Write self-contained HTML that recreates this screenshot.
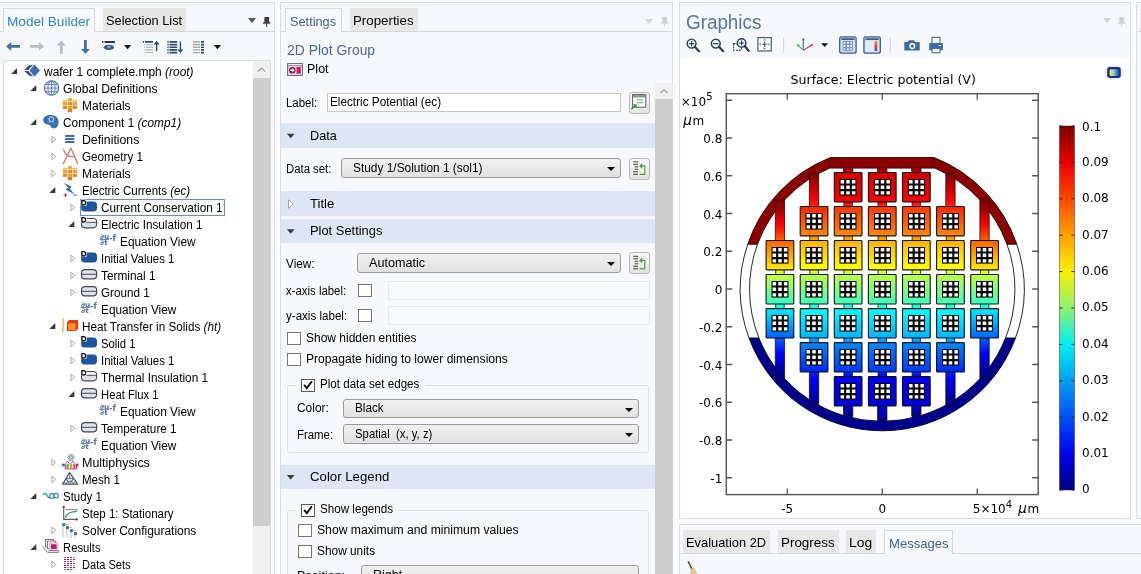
<!DOCTYPE html><html><head><meta charset="utf-8"><title>COMSOL</title><style>
*{box-sizing:border-box;margin:0;padding:0}
html,body{width:1141px;height:574px;overflow:hidden;background:#fafbfe;}
body{position:relative;font-family:"Liberation Sans",sans-serif;font-size:12.5px;color:#000;}
.a{position:absolute}
.t{position:absolute;white-space:pre;line-height:16px;height:16px}
.pn{position:absolute;border:1px solid #d8dce7;background:#f6f8fd}
.tab{position:absolute;top:8px;height:24px;font-size:14px;line-height:22px;white-space:nowrap}
.tab.on{background:#f8f9fd;border:1px solid #d3d7e0;border-bottom:none;color:#3c7fc4}
.tab.off{background:#e7e7e7;color:#000;height:23px}
.sec{position:absolute;left:281px;width:374px;height:24px;background:#dce6f4}
.sec span{position:absolute;left:29px;top:3px;font-size:13.5px;line-height:18px}
.cb{position:absolute;width:13px;height:13px;border:1px solid #4a4a4a;background:#fff}
.combo{position:absolute;height:21px;border:1px solid #9a9a9a;border-radius:3px;background:linear-gradient(#f1f1f1,#e1e1e1)}
.combo i{position:absolute;right:4px;top:8px;width:0;height:0;border-left:4px solid transparent;border-right:4px solid transparent;border-top:5px solid #000}
.combo span{position:absolute;left:11px;top:2px;line-height:16px;white-space:nowrap}
.inp{position:absolute;background:#fff;border:1px solid #c6c6c6}
.btn{position:absolute;width:21px;height:22px;border:1px solid #b5b5b5;border-radius:3px;background:linear-gradient(#f8f8f8,#e4e4e4)}
.grp{position:absolute;border:1px solid #dcdfe6;border-radius:3px}
</style></head><body><div id="root" style="position:absolute;left:0;top:0;width:1141px;height:574px;will-change:transform">
<div class="pn" style="left:-1px;top:2px;width:276px;height:580px"></div>
<div class="a" style="left:0;top:31px;width:275px;height:1px;background:#d3d7e0"></div>
<div class="tab on" style="left:3px;width:92px"></div>
<span class="t" id="x1" style="left:7.3px;top:11.5px;font-size:13.5px;line-height:20px;height:20px;color:#2e86d6;transform:scaleX(1.0067);transform-origin:0 50%;">Model Builder</span>
<div class="tab off" style="left:103px;width:83px"></div>
<span class="t" id="x2" style="left:106.3px;top:10.5px;font-size:13.5px;line-height:20px;height:20px;transform:scaleX(0.9477);transform-origin:0 50%;">Selection List</span>
<div class="a" style="left:248px;top:18.3px;border-left:4px solid transparent;border-right:4px solid transparent;border-top:5px solid #555"></div>
<svg class="a" style="left:258px;top:10px" width="16" height="20" viewBox="258 10 16 20"><path d="M264.4 17h4.7v5.3h1.2v1.5h-7.2v-1.5h1.3z" fill="#3c3c3c"/><path d="M266.2 23.8h0.9v3.2h-0.9z" fill="#3c3c3c"/></svg>
<svg class="a" style="left:0px;top:34px" width="232" height="24" viewBox="0 34 232 24"><path d="M6.2 46.4 L11.2 41.9 L11.2 45 L19.9 45 L19.9 47.8 L11.2 47.8 L11.2 50.9 Z" fill="#3e6fa9"/><path d="M43.9 46.4 L38.9 41.9 L38.9 45 L30 45 L30 47.8 L38.9 47.8 L38.9 50.9 Z" fill="#b9bdc6"/><path d="M61.35 40.4 L65.7 45.4 L62.75 45.4 L62.75 53.7 L59.95 53.7 L59.95 45.4 L57 45.4 Z" fill="#b9bdc6"/><path d="M85.4 53.9 L89.8 48.9 L86.8 48.9 L86.8 40 L84 40 L84 48.9 L81 48.9 Z" fill="#3e6fa9"/><path d="M102.1 40.9h1.3v2h-1.3z M104.5 40.9h10.4v2h-10.4z" fill="#25354d"/><ellipse cx="108.9" cy="47.3" rx="5.1" ry="2.6" fill="#3d5f8f"/><ellipse cx="108.9" cy="47" rx="1.7" ry="1.2" fill="#8aa4c8"/><path d="M124 45 L131.1 45 L127.55 49.3 Z" fill="#111"/><path d="M142.9 41.0h1.3v1.8h-1.3z M145 41.0h8v1.8h-8z" fill="#2f4b6f"/><path d="M143.9 43.900000000000006h1v1.1h-1z M146 43.900000000000006h7v1.1h-7zM143.9 46.6h1v1.1h-1z M146 46.6h7v1.1h-7zM143.9 49.300000000000004h1v1.1h-1z M146 49.300000000000004h7v1.1h-7zM143.9 52.0h1v1.1h-1z M146 52.0h7v1.1h-7z" fill="#a9b0bb"/><path d="M156.6 40.8 L159.6 44.4 L157.3 44.4 L157.3 51.2 L155.9 51.2 L155.9 44.4 L153.6 44.4 Z" fill="#2f4b6f"/><path d="M167.4 41.0h1.3v1.7h-1.3z M169.6 41.0h7.6v1.7h-7.6zM167.4 43.7h1.3v1.7h-1.3z M169.6 43.7h7.6v1.7h-7.6zM167.4 46.4h1.3v1.7h-1.3z M169.6 46.4h7.6v1.7h-7.6zM167.4 49.1h1.3v1.7h-1.3z M169.6 49.1h7.6v1.7h-7.6zM167.4 51.8h1.3v1.7h-1.3z M169.6 51.8h7.6v1.7h-7.6z" fill="#2f4b6f"/><path d="M180.4 53 L183.4 49.4 L181.1 49.4 L181.1 41.5 L179.7 41.5 L179.7 49.4 L177.4 49.4 Z" fill="#2f4b6f"/><path d="M193 41.1h7v1.4h-7zM193 43.800000000000004h7v1.4h-7zM193 46.5h7v1.4h-7zM193 49.2h7v1.4h-7zM193 51.9h7v1.4h-7z" fill="#a8a8a8"/><path d="M201 41.0h3v1.7h-3zM201 43.7h3v1.7h-3zM201 46.4h3v1.7h-3zM201 49.1h3v1.7h-3zM201 51.8h3v1.7h-3z" fill="#2f4b6f"/><path d="M213.9 45 L221 45 L217.45 49.3 Z" fill="#111"/></svg>
<div class="a" style="left:3px;top:60px;width:268px;height:520px;background:#fff;border:1px solid #d6dae3"></div>
<div class="a" style="left:253px;top:61px;width:17px;height:513px;background:#f0f0f0"></div>
<div class="a" style="left:253px;top:78px;width:17px;height:448px;background:#cdcdcd"></div>
<svg class="a" style="left:253px;top:61px" width="17" height="17"><path d="M5 10.5 L8.5 7 L12 10.5" fill="none" stroke="#9a9a9a" stroke-width="1.2"/></svg>
<span class="t" id="r0" style="left:43.95px;top:63.5px;font-size:12.5px;line-height:16px;height:16px;transform:scaleX(0.9570);transform-origin:0 50%;">wafer 1 complete.mph<i> (root)</i></span>
<svg class="a" style="left:10px;top:66px" width="11" height="11" viewBox="-0.25 -0.5 11 11"><path d="M6.8 1.5 L6.8 7.4 L0.8 7.4 Z" fill="#3a3a3a"/></svg>
<svg class="a" style="left:22px;top:61px" width="23" height="21" viewBox="-22.25 -10.5 23 21"><path d="M-9.85 -7 L-4.3 -1 L-9.85 5.3 L-14.7 -1.1 Z" fill="#3a69ae"/><path d="M-20.3 -1.5 L-15.1 -6.2 L-11.2 -6.8 L-15.8 -1.5 Z" fill="#34517f"/><path d="M-20.1 -0.6 L-15.8 -0.6 L-11.1 4.9 L-15.1 3.9 Z" fill="#34517f"/></svg>
<span class="t" id="r1" style="left:62.8px;top:80.5px;font-size:12.5px;line-height:16px;height:16px;transform:scaleX(0.9656);transform-origin:0 50%;">Global Definitions</span>
<svg class="a" style="left:29px;top:83px" width="11" height="11" viewBox="-0.5 -0.5 11 11"><path d="M6.8 1.5 L6.8 7.4 L0.8 7.4 Z" fill="#3a3a3a"/></svg>
<svg class="a" style="left:41px;top:78px" width="23" height="21" viewBox="-22.5 -10.5 23 21"><circle cx="-11.95" cy="-0.4" r="7.1" fill="#eef3fb" stroke="#5a7fb3" stroke-width="1.3"/><path d="M-11.95 -7.5 V6.7 M-19 -0.4 H-4.9 M-17.8 -4 H-6.1 M-17.8 3.2 H-6.1" stroke="#5a7fb3" stroke-width="0.9" fill="none"/><ellipse cx="-11.95" cy="-0.4" rx="3.6" ry="7.1" fill="none" stroke="#5a7fb3" stroke-width="0.9"/></svg>
<span class="t" id="r2" style="left:81.8px;top:97.5px;font-size:12.5px;line-height:16px;height:16px;transform:scaleX(0.9582);transform-origin:0 50%;">Materials</span>
<svg class="a" style="left:60px;top:95px" width="23" height="21" viewBox="-22.5 -10.5 23 21"><rect x="-19.6" y="-3.6" width="4.3" height="3.2" fill="#f2a12e"/><rect x="-19.6" y="0.2" width="4.3" height="3.2" fill="#e58a22"/><rect x="-14.7" y="-7.4" width="4.3" height="3.2" fill="#f5a733"/><rect x="-14.7" y="-3.6" width="4.3" height="3.2" fill="#e9922a"/><rect x="-14.7" y="0.2" width="4.3" height="3.2" fill="#f0a030"/><rect x="-14.7" y="3.5" width="4.3" height="3.2" fill="#dd7f1f"/><rect x="-9.8" y="-3.6" width="4.3" height="3.2" fill="#f2a12e"/><rect x="-9.8" y="0.2" width="4.3" height="3.2" fill="#e58a22"/><rect x="-19.6" y="-5.6" width="4.3" height="1.6" fill="#f7b95a"/><rect x="-9.8" y="-5.6" width="4.3" height="1.6" fill="#f7b95a"/></svg>
<span class="t" id="r3" style="left:62.8px;top:114.5px;font-size:12.5px;line-height:16px;height:16px;transform:scaleX(0.9494);transform-origin:0 50%;">Component 1<i> (comp1)</i></span>
<svg class="a" style="left:29px;top:117px" width="11" height="11" viewBox="-0.5 -0.5 11 11"><path d="M6.8 1.5 L6.8 7.4 L0.8 7.4 Z" fill="#3a3a3a"/></svg>
<svg class="a" style="left:41px;top:112px" width="23" height="21" viewBox="-22.5 -10.5 23 21"><path d="M-20.4 -2.6 C-20.4 -5.8 -16.6 -7.5 -12.9 -7.5 C-8.6 -7.5 -5.2 -5.2 -5 -1.6 C-4.9 1.2 -5.2 3.9 -7.4 5.3 C-9.4 6.5 -12.3 5.8 -12.9 3.7 C-13.3 2.4 -14.4 2.5 -16 2 C-18.6 1.2 -20.4 -0.2 -20.4 -2.6 Z" fill="#3873b7"/><path d="M-14.3 -0.6 h1.3 v-0.6 c-1.1 -0.5 -1.5 -1.3 -1.5 -2.2 c0 -1.4 1.1 -2.2 2.3 -2.2 c1.2 0 2.3 0.8 2.3 2.2 c0 0.9 -0.4 1.7 -1.5 2.2 v0.6 h1.3" fill="none" stroke="#fff" stroke-width="0.9"/></svg>
<span class="t" id="r4" style="left:81.8px;top:131.5px;font-size:12.5px;line-height:16px;height:16px;transform:scaleX(0.9824);transform-origin:0 50%;">Definitions</span>
<svg class="a" style="left:49px;top:134px" width="11" height="11" viewBox="-0.5 -0.5 11 11"><path d="M2.4 1.6 L6.2 4.9 L2.4 8.2 Z" fill="#fff" stroke="#a9a9a9" stroke-width="1"/></svg>
<svg class="a" style="left:60px;top:129px" width="23" height="21" viewBox="-22.5 -10.5 23 21"><path d="M-17.4 -4.5h9.3v1.9h-9.3z M-17.4 -1.4h9.3v1.9h-9.3z M-17.4 1.6h9.3v1.9h-9.3z" fill="#3a6ea8"/></svg>
<span class="t" id="r5" style="left:81.8px;top:148.5px;font-size:12.5px;line-height:16px;height:16px;transform:scaleX(0.9355);transform-origin:0 50%;">Geometry 1</span>
<svg class="a" style="left:49px;top:151px" width="11" height="11" viewBox="-0.5 -0.5 11 11"><path d="M2.4 1.6 L6.2 4.9 L2.4 8.2 Z" fill="#fff" stroke="#a9a9a9" stroke-width="1"/></svg>
<svg class="a" style="left:60px;top:146px" width="23" height="21" viewBox="-22.5 -10.5 23 21"><path d="M-11.5 -8.3 L-19.2 7.2 M-11.5 -8.3 L-4.8 7.2" stroke="#e0685c" stroke-width="1.2" fill="none" stroke-linecap="round"/><path d="M-18.9 -7.2 C-18.3 -2.2 -13.5 1.2 -7.9 0.1" stroke="#e0685c" stroke-width="1.1" fill="none"/></svg>
<span class="t" id="r6" style="left:81.8px;top:165.5px;font-size:12.5px;line-height:16px;height:16px;transform:scaleX(0.9582);transform-origin:0 50%;">Materials</span>
<svg class="a" style="left:49px;top:168px" width="11" height="11" viewBox="-0.5 -0.5 11 11"><path d="M2.4 1.6 L6.2 4.9 L2.4 8.2 Z" fill="#fff" stroke="#a9a9a9" stroke-width="1"/></svg>
<svg class="a" style="left:60px;top:163px" width="23" height="21" viewBox="-22.5 -10.5 23 21"><rect x="-19.6" y="-3.6" width="4.3" height="3.2" fill="#f2a12e"/><rect x="-19.6" y="0.2" width="4.3" height="3.2" fill="#e58a22"/><rect x="-14.7" y="-7.4" width="4.3" height="3.2" fill="#f5a733"/><rect x="-14.7" y="-3.6" width="4.3" height="3.2" fill="#e9922a"/><rect x="-14.7" y="0.2" width="4.3" height="3.2" fill="#f0a030"/><rect x="-14.7" y="3.5" width="4.3" height="3.2" fill="#dd7f1f"/><rect x="-9.8" y="-3.6" width="4.3" height="3.2" fill="#f2a12e"/><rect x="-9.8" y="0.2" width="4.3" height="3.2" fill="#e58a22"/><rect x="-19.6" y="-5.6" width="4.3" height="1.6" fill="#f7b95a"/><rect x="-9.8" y="-5.6" width="4.3" height="1.6" fill="#f7b95a"/></svg>
<span class="t" id="r7" style="left:81.8px;top:182.5px;font-size:12.5px;line-height:16px;height:16px;transform:scaleX(0.9209);transform-origin:0 50%;">Electric Currents<i> (ec)</i></span>
<svg class="a" style="left:48px;top:185px" width="11" height="11" viewBox="-0.5 -0.5 11 11"><path d="M6.8 1.5 L6.8 7.4 L0.8 7.4 Z" fill="#3a3a3a"/></svg>
<svg class="a" style="left:60px;top:180px" width="23" height="21" viewBox="-22.5 -10.5 23 21"><path d="M-18.6 -7.7 L-10.6 -3.6 L-12.8 -1.9 L-7.8 3.9 L-17 -1 L-14.4 -2.8 Z" fill="#2f6fb8"/><path d="M-18.9 4.6h3.6 M-17.1 2.8v3.6" stroke="#c0202c" stroke-width="1"/><path d="M-9.2 4.6h4" stroke="#3a86b0" stroke-width="1"/></svg>
<div class="a" style="left:80px;top:199px;width:145px;height:17px;border:1px solid #6a8dc2;background:#fff"></div>
<span class="t" id="r8" style="left:100.8px;top:199.5px;font-size:12.5px;line-height:16px;height:16px;transform:scaleX(0.9409);transform-origin:0 50%;">Current Conservation 1</span>
<svg class="a" style="left:68px;top:202px" width="11" height="11" viewBox="-0.5 -0.5 11 11"><path d="M2.4 1.6 L6.2 4.9 L2.4 8.2 Z" fill="#fff" stroke="#a9a9a9" stroke-width="1"/></svg>
<svg class="a" style="left:79px;top:197px" width="23" height="21" viewBox="-22.5 -10.5 23 21"><rect x="-20.4" y="-5.9" width="15.9" height="10" rx="3.6" fill="#1c569e"/><rect x="-20.9" y="-7.9" width="6" height="6" fill="#fff"/><path d="M-19.6 -6.8 h1.6 c1.5 0 2.1 0.9 2.1 2.1 c0 1.2 -0.6 2.1 -2.1 2.1 h-1.6 Z" fill="none" stroke="#000" stroke-width="1.25"/></svg>
<span class="t" id="r9" style="left:100.8px;top:216.5px;font-size:12.5px;line-height:16px;height:16px;transform:scaleX(0.9374);transform-origin:0 50%;">Electric Insulation 1</span>
<svg class="a" style="left:67px;top:219px" width="11" height="11" viewBox="-0.5 -0.5 11 11"><path d="M6.8 1.5 L6.8 7.4 L0.8 7.4 Z" fill="#3a3a3a"/></svg>
<svg class="a" style="left:79px;top:214px" width="23" height="21" viewBox="-22.5 -10.5 23 21"><rect x="-20" y="-6" width="15.1" height="9.4" rx="3.3" fill="#dde1ea" stroke="#444b57" stroke-width="1.1"/><path d="M-19.4 -2.3 V-3 a2.8 2.8 0 0 1 2.8 -2.5 h8.3 a2.8 2.8 0 0 1 2.8 2.5 V-2.3 Z" fill="#fff"/><path d="M-20 -2.2 H-4.9" stroke="#444b57" stroke-width="1"/><rect x="-20.9" y="-7.9" width="6" height="6" fill="#fff"/><path d="M-19.6 -6.8 h1.6 c1.5 0 2.1 0.9 2.1 2.1 c0 1.2 -0.6 2.1 -2.1 2.1 h-1.6 Z" fill="none" stroke="#000" stroke-width="1.25"/></svg>
<span class="t" id="r10" style="left:119.8px;top:233.5px;font-size:12.5px;line-height:16px;height:16px;transform:scaleX(0.9487);transform-origin:0 50%;">Equation View</span>
<svg class="a" style="left:98px;top:231px" width="23" height="21" viewBox="-22.5 -10.5 23 21"><g fill="#4f6f9e" font-family='"DejaVu Sans",sans-serif' font-size="6.8" font-weight="bold"><text x="-20.6" y="-3" textLength="9.2" lengthAdjust="spacingAndGlyphs">∂u</text><text x="-20.4" y="3.9" textLength="7.6" lengthAdjust="spacingAndGlyphs">∂t</text><text x="-11.2" y="-0.6" font-size="9" font-weight="bold" textLength="6.6" lengthAdjust="spacingAndGlyphs">-f</text></g><path d="M-20.8 -1.9 h9.6" stroke="#4f6f9e" stroke-width="0.9"/></svg>
<span class="t" id="r11" style="left:100.8px;top:250.5px;font-size:12.5px;line-height:16px;height:16px;transform:scaleX(0.9126);transform-origin:0 50%;">Initial Values 1</span>
<svg class="a" style="left:68px;top:253px" width="11" height="11" viewBox="-0.5 -0.5 11 11"><path d="M2.4 1.6 L6.2 4.9 L2.4 8.2 Z" fill="#fff" stroke="#a9a9a9" stroke-width="1"/></svg>
<svg class="a" style="left:79px;top:248px" width="23" height="21" viewBox="-22.5 -10.5 23 21"><rect x="-20.4" y="-5.9" width="15.9" height="10" rx="3.6" fill="#1c569e"/><rect x="-20.9" y="-7.9" width="6" height="6" fill="#fff"/><path d="M-19.6 -6.8 h1.6 c1.5 0 2.1 0.9 2.1 2.1 c0 1.2 -0.6 2.1 -2.1 2.1 h-1.6 Z" fill="none" stroke="#000" stroke-width="1.25"/></svg>
<span class="t" id="r12" style="left:100.8px;top:267.5px;font-size:12.5px;line-height:16px;height:16px;transform:scaleX(0.9467);transform-origin:0 50%;">Terminal 1</span>
<svg class="a" style="left:68px;top:270px" width="11" height="11" viewBox="-0.5 -0.5 11 11"><path d="M2.4 1.6 L6.2 4.9 L2.4 8.2 Z" fill="#fff" stroke="#a9a9a9" stroke-width="1"/></svg>
<svg class="a" style="left:79px;top:265px" width="23" height="21" viewBox="-22.5 -10.5 23 21"><rect x="-20" y="-5.8" width="15.1" height="9.2" rx="3.4" fill="#dfe3ec" stroke="#3f4958" stroke-width="1.2"/><path d="M-20 -1.2 H-4.9" stroke="#3f4958" stroke-width="1"/></svg>
<span class="t" id="r13" style="left:100.8px;top:284.5px;font-size:12.5px;line-height:16px;height:16px;transform:scaleX(0.9372);transform-origin:0 50%;">Ground 1</span>
<svg class="a" style="left:68px;top:287px" width="11" height="11" viewBox="-0.5 -0.5 11 11"><path d="M2.4 1.6 L6.2 4.9 L2.4 8.2 Z" fill="#fff" stroke="#a9a9a9" stroke-width="1"/></svg>
<svg class="a" style="left:79px;top:282px" width="23" height="21" viewBox="-22.5 -10.5 23 21"><rect x="-20" y="-5.8" width="15.1" height="9.2" rx="3.4" fill="#dfe3ec" stroke="#3f4958" stroke-width="1.2"/><path d="M-20 -1.2 H-4.9" stroke="#3f4958" stroke-width="1"/></svg>
<span class="t" id="r14" style="left:100.8px;top:301.5px;font-size:12.5px;line-height:16px;height:16px;transform:scaleX(0.9456);transform-origin:0 50%;">Equation View</span>
<svg class="a" style="left:79px;top:299px" width="23" height="21" viewBox="-22.5 -10.5 23 21"><g fill="#4f6f9e" font-family='"DejaVu Sans",sans-serif' font-size="6.8" font-weight="bold"><text x="-20.6" y="-3" textLength="9.2" lengthAdjust="spacingAndGlyphs">∂u</text><text x="-20.4" y="3.9" textLength="7.6" lengthAdjust="spacingAndGlyphs">∂t</text><text x="-11.2" y="-0.6" font-size="9" font-weight="bold" textLength="6.6" lengthAdjust="spacingAndGlyphs">-f</text></g><path d="M-20.8 -1.9 h9.6" stroke="#4f6f9e" stroke-width="0.9"/></svg>
<span class="t" id="r15" style="left:81.8px;top:318.5px;font-size:12.5px;line-height:16px;height:16px;transform:scaleX(0.9355);transform-origin:0 50%;">Heat Transfer in Solids<i> (ht)</i></span>
<svg class="a" style="left:48px;top:321px" width="11" height="11" viewBox="-0.5 -0.5 11 11"><path d="M6.8 1.5 L6.8 7.4 L0.8 7.4 Z" fill="#3a3a3a"/></svg>
<svg class="a" style="left:60px;top:316px" width="23" height="21" viewBox="-22.5 -10.5 23 21"><path d="M-19.2 -8.3 C-21 -4.5 -17.6 -2.5 -19.2 0.6 C-20.4 3 -19.8 4.5 -19.2 5.9" fill="none" stroke="#f3a94a" stroke-width="1.3"/><path d="M-15.5 -4.4 L-13.2 -6.6 H-4.9 L-4.3 -6 V2.2 L-6.6 4.5 H-15.5 Z" fill="#e23a1e"/><rect x="-14.3" y="-3.3" width="7.3" height="6.9" fill="#ff941f"/></svg>
<span class="t" id="r16" style="left:100.8px;top:335.5px;font-size:12.5px;line-height:16px;height:16px;transform:scaleX(0.9049);transform-origin:0 50%;">Solid 1</span>
<svg class="a" style="left:68px;top:338px" width="11" height="11" viewBox="-0.5 -0.5 11 11"><path d="M2.4 1.6 L6.2 4.9 L2.4 8.2 Z" fill="#fff" stroke="#a9a9a9" stroke-width="1"/></svg>
<svg class="a" style="left:79px;top:333px" width="23" height="21" viewBox="-22.5 -10.5 23 21"><rect x="-20.4" y="-5.9" width="15.9" height="10" rx="3.6" fill="#1c569e"/><rect x="-20.9" y="-7.9" width="6" height="6" fill="#fff"/><path d="M-19.6 -6.8 h1.6 c1.5 0 2.1 0.9 2.1 2.1 c0 1.2 -0.6 2.1 -2.1 2.1 h-1.6 Z" fill="none" stroke="#000" stroke-width="1.25"/></svg>
<span class="t" id="r17" style="left:100.8px;top:352.5px;font-size:12.5px;line-height:16px;height:16px;transform:scaleX(0.9126);transform-origin:0 50%;">Initial Values 1</span>
<svg class="a" style="left:68px;top:355px" width="11" height="11" viewBox="-0.5 -0.5 11 11"><path d="M2.4 1.6 L6.2 4.9 L2.4 8.2 Z" fill="#fff" stroke="#a9a9a9" stroke-width="1"/></svg>
<svg class="a" style="left:79px;top:350px" width="23" height="21" viewBox="-22.5 -10.5 23 21"><rect x="-20.4" y="-5.9" width="15.9" height="10" rx="3.6" fill="#1c569e"/><rect x="-20.9" y="-7.9" width="6" height="6" fill="#fff"/><path d="M-19.6 -6.8 h1.6 c1.5 0 2.1 0.9 2.1 2.1 c0 1.2 -0.6 2.1 -2.1 2.1 h-1.6 Z" fill="none" stroke="#000" stroke-width="1.25"/></svg>
<span class="t" id="r18" style="left:100.8px;top:369.5px;font-size:12.5px;line-height:16px;height:16px;transform:scaleX(0.9456);transform-origin:0 50%;">Thermal Insulation 1</span>
<svg class="a" style="left:68px;top:372px" width="11" height="11" viewBox="-0.5 -0.5 11 11"><path d="M2.4 1.6 L6.2 4.9 L2.4 8.2 Z" fill="#fff" stroke="#a9a9a9" stroke-width="1"/></svg>
<svg class="a" style="left:79px;top:367px" width="23" height="21" viewBox="-22.5 -10.5 23 21"><rect x="-20" y="-6" width="15.1" height="9.4" rx="3.3" fill="#dde1ea" stroke="#444b57" stroke-width="1.1"/><path d="M-19.4 -2.3 V-3 a2.8 2.8 0 0 1 2.8 -2.5 h8.3 a2.8 2.8 0 0 1 2.8 2.5 V-2.3 Z" fill="#fff"/><path d="M-20 -2.2 H-4.9" stroke="#444b57" stroke-width="1"/><rect x="-20.9" y="-7.9" width="6" height="6" fill="#fff"/><path d="M-19.6 -6.8 h1.6 c1.5 0 2.1 0.9 2.1 2.1 c0 1.2 -0.6 2.1 -2.1 2.1 h-1.6 Z" fill="none" stroke="#000" stroke-width="1.25"/></svg>
<span class="t" id="r19" style="left:100.8px;top:386.5px;font-size:12.5px;line-height:16px;height:16px;transform:scaleX(0.9011);transform-origin:0 50%;">Heat Flux 1</span>
<svg class="a" style="left:67px;top:389px" width="11" height="11" viewBox="-0.5 -0.5 11 11"><path d="M6.8 1.5 L6.8 7.4 L0.8 7.4 Z" fill="#3a3a3a"/></svg>
<svg class="a" style="left:79px;top:384px" width="23" height="21" viewBox="-22.5 -10.5 23 21"><rect x="-20" y="-5.8" width="15.1" height="9.2" rx="3.4" fill="#dfe3ec" stroke="#3f4958" stroke-width="1.2"/><path d="M-20 -1.2 H-4.9" stroke="#3f4958" stroke-width="1"/></svg>
<span class="t" id="r20" style="left:119.8px;top:403.5px;font-size:12.5px;line-height:16px;height:16px;transform:scaleX(0.9487);transform-origin:0 50%;">Equation View</span>
<svg class="a" style="left:98px;top:401px" width="23" height="21" viewBox="-22.5 -10.5 23 21"><g fill="#4f6f9e" font-family='"DejaVu Sans",sans-serif' font-size="6.8" font-weight="bold"><text x="-20.6" y="-3" textLength="9.2" lengthAdjust="spacingAndGlyphs">∂u</text><text x="-20.4" y="3.9" textLength="7.6" lengthAdjust="spacingAndGlyphs">∂t</text><text x="-11.2" y="-0.6" font-size="9" font-weight="bold" textLength="6.6" lengthAdjust="spacingAndGlyphs">-f</text></g><path d="M-20.8 -1.9 h9.6" stroke="#4f6f9e" stroke-width="0.9"/></svg>
<span class="t" id="r21" style="left:100.8px;top:420.5px;font-size:12.5px;line-height:16px;height:16px;transform:scaleX(0.9379);transform-origin:0 50%;">Temperature 1</span>
<svg class="a" style="left:68px;top:423px" width="11" height="11" viewBox="-0.5 -0.5 11 11"><path d="M2.4 1.6 L6.2 4.9 L2.4 8.2 Z" fill="#fff" stroke="#a9a9a9" stroke-width="1"/></svg>
<svg class="a" style="left:79px;top:418px" width="23" height="21" viewBox="-22.5 -10.5 23 21"><rect x="-20" y="-5.8" width="15.1" height="9.2" rx="3.4" fill="#dfe3ec" stroke="#3f4958" stroke-width="1.2"/><path d="M-20 -1.2 H-4.9" stroke="#3f4958" stroke-width="1"/></svg>
<span class="t" id="r22" style="left:100.8px;top:437.5px;font-size:12.5px;line-height:16px;height:16px;transform:scaleX(0.9456);transform-origin:0 50%;">Equation View</span>
<svg class="a" style="left:79px;top:435px" width="23" height="21" viewBox="-22.5 -10.5 23 21"><g fill="#4f6f9e" font-family='"DejaVu Sans",sans-serif' font-size="6.8" font-weight="bold"><text x="-20.6" y="-3" textLength="9.2" lengthAdjust="spacingAndGlyphs">∂u</text><text x="-20.4" y="3.9" textLength="7.6" lengthAdjust="spacingAndGlyphs">∂t</text><text x="-11.2" y="-0.6" font-size="9" font-weight="bold" textLength="6.6" lengthAdjust="spacingAndGlyphs">-f</text></g><path d="M-20.8 -1.9 h9.6" stroke="#4f6f9e" stroke-width="0.9"/></svg>
<span class="t" id="r23" style="left:81.8px;top:454.5px;font-size:12.5px;line-height:16px;height:16px;transform:scaleX(0.9966);transform-origin:0 50%;">Multiphysics</span>
<svg class="a" style="left:49px;top:457px" width="11" height="11" viewBox="-0.5 -0.5 11 11"><path d="M2.4 1.6 L6.2 4.9 L2.4 8.2 Z" fill="#fff" stroke="#a9a9a9" stroke-width="1"/></svg>
<svg class="a" style="left:60px;top:452px" width="23" height="21" viewBox="-22.5 -10.5 23 21"><g stroke="#8e9aa6" stroke-width="0.8" fill="none"><ellipse cx="-11.4" cy="-5" rx="3.6" ry="1.4"/><ellipse cx="-11.4" cy="-5" rx="3.6" ry="1.4" transform="rotate(60 -11.4 -5)"/><ellipse cx="-11.4" cy="-5" rx="3.6" ry="1.4" transform="rotate(120 -11.4 -5)"/></g><path d="M-17 1.2 L-15 -1.2 L-13 1.2 M-11.6 1.2 L-9.6 -1.2 L-7.6 1.2" fill="none" stroke="#c3286a" stroke-width="0.9"/><path d="M-17.2 1.6 V6.4 H-6 V1.6" fill="none" stroke="#c3286a" stroke-width="1"/><rect x="-20.6" y="1.2" width="2.8" height="2.6" fill="#3a6ab0"/><rect x="-16" y="1.6" width="2.2" height="3.8" fill="#4aa63c"/><rect x="-12.6" y="1.6" width="2.2" height="3.8" fill="#f0921e"/><rect x="-9.2" y="1.6" width="2" height="3.8" fill="#e0403a"/><rect x="-6.6" y="1.2" width="2.6" height="2.6" fill="#c3286a"/></svg>
<span class="t" id="r24" style="left:81.8px;top:471.5px;font-size:12.5px;line-height:16px;height:16px;transform:scaleX(0.9232);transform-origin:0 50%;">Mesh 1</span>
<svg class="a" style="left:49px;top:474px" width="11" height="11" viewBox="-0.5 -0.5 11 11"><path d="M2.4 1.6 L6.2 4.9 L2.4 8.2 Z" fill="#fff" stroke="#a9a9a9" stroke-width="1"/></svg>
<svg class="a" style="left:60px;top:469px" width="23" height="21" viewBox="-22.5 -10.5 23 21"><path d="M-12.9 -7 L-20 4.7 H-4.9 Z" fill="#e9edf3" stroke="#46566a" stroke-width="1.2" stroke-linejoin="round"/><path d="M-16.5 -1 H-9.2 L-12.9 4.7 Z M-12.9 -7 V-1 M-18.2 1.8 L-16.4 4.7 M-16.5 -1 L-14.7 1.8 H-11 L-9.2 -1 M-7.5 1.8 L-9.3 4.7 M-14.7 1.8 L-16.4 4.7 M-11 1.8 L-9.3 4.7" fill="none" stroke="#46566a" stroke-width="0.7"/></svg>
<span class="t" id="r25" style="left:62.8px;top:488.5px;font-size:12.5px;line-height:16px;height:16px;transform:scaleX(0.9165);transform-origin:0 50%;">Study 1</span>
<svg class="a" style="left:29px;top:491px" width="11" height="11" viewBox="-0.5 -0.5 11 11"><path d="M6.8 1.5 L6.8 7.4 L0.8 7.4 Z" fill="#3a3a3a"/></svg>
<svg class="a" style="left:41px;top:486px" width="23" height="21" viewBox="-22.5 -10.5 23 21"><path d="M-20.4 -1.4 C-19.2 -3.8 -17.6 -3.8 -16.6 -1.4 C-15.8 0.6 -14.6 1.6 -13.4 0.6" fill="none" stroke="#2b8cab" stroke-width="1.2"/><circle cx="-11.6" cy="-0.6" r="2.3" fill="none" stroke="#2b8cab" stroke-width="1.1"/><circle cx="-7.4" cy="-0.8" r="2.3" fill="none" stroke="#2b8cab" stroke-width="1.1"/></svg>
<span class="t" id="r26" style="left:81.8px;top:505.5px;font-size:12.5px;line-height:16px;height:16px;transform:scaleX(0.9218);transform-origin:0 50%;">Step 1: Stationary</span>
<svg class="a" style="left:60px;top:503px" width="23" height="21" viewBox="-22.5 -10.5 23 21"><path d="M-18.8 -7.4 V5.9 H-5" fill="none" stroke="#5a5a62" stroke-width="1.1"/><path d="M-20.3 -5.6 L-18.8 -7.8 L-17.3 -5.6 M-6.6 4.5 L-4.6 5.9 L-6.6 7.3" fill="none" stroke="#5a5a62" stroke-width="0.9"/><path d="M-17 -3.9 H-4.6" stroke="#7a8088" stroke-width="1"/><path d="M-17.2 4.2 C-15.6 -0.4 -11.6 -2 -5.4 -2.1" fill="none" stroke="#3a8fa0" stroke-width="1.2"/></svg>
<span class="t" id="r27" style="left:81.8px;top:522.5px;font-size:12.5px;line-height:16px;height:16px;transform:scaleX(0.9568);transform-origin:0 50%;">Solver Configurations</span>
<svg class="a" style="left:49px;top:525px" width="11" height="11" viewBox="-0.5 -0.5 11 11"><path d="M2.4 1.6 L6.2 4.9 L2.4 8.2 Z" fill="#fff" stroke="#a9a9a9" stroke-width="1"/></svg>
<svg class="a" style="left:60px;top:520px" width="23" height="21" viewBox="-22.5 -10.5 23 21"><path d="M-19.5 -5 V7.3 M-15.6 -2 V7.3 M-11.4 1 V7.3 M-7.4 4 V7.3" stroke="#a9b8cc" stroke-width="0.9"/><path d="M-18.6 -6 h4 M-14.6 -3 h4 M-10.6 0 h4" stroke="#a9b8cc" stroke-width="0.8"/><rect x="-20.2" y="-7.3" width="2.9" height="2.9" fill="#3b6fa8"/><rect x="-16.6" y="-4.3" width="2.9" height="2.9" fill="#3b6fa8"/><rect x="-12.6" y="-1.3" width="2.9" height="2.9" fill="#3b6fa8"/><rect x="-8.4" y="1.7" width="2.9" height="2.9" fill="#3b6fa8"/></svg>
<span class="t" id="r28" style="left:62.8px;top:539.5px;font-size:12.5px;line-height:16px;height:16px;transform:scaleX(0.9019);transform-origin:0 50%;">Results</span>
<svg class="a" style="left:29px;top:542px" width="11" height="11" viewBox="-0.5 -0.5 11 11"><path d="M6.8 1.5 L6.8 7.4 L0.8 7.4 Z" fill="#3a3a3a"/></svg>
<svg class="a" style="left:41px;top:537px" width="23" height="21" viewBox="-22.5 -10.5 23 21"><rect x="-18" y="-8" width="8" height="7.5" fill="#fff" stroke="#5a6068" stroke-width="0.8"/><rect x="-16" y="-6.5" width="8" height="7.5" fill="#fff" stroke="#5a6068" stroke-width="0.8"/><rect x="-14" y="-4.7" width="8.5" height="7.5" fill="#f8c4dc" stroke="#ea9ac2" stroke-width="0.6"/><rect x="-12.5" y="-3.2" width="5.6" height="4.6" fill="#b0205f"/><path d="M-19.4 -1.2 L-20.2 0.4 L-16 4.9 H-5 V3.2 H-15.2" fill="none" stroke="#5a6068" stroke-width="0.8" stroke-linejoin="round"/></svg>
<span class="t" id="r29" style="left:81.8px;top:556.5px;font-size:12.5px;line-height:16px;height:16px;transform:scaleX(0.8854);transform-origin:0 50%;">Data Sets</span>
<svg class="a" style="left:49px;top:559px" width="11" height="11" viewBox="-0.5 -0.5 11 11"><path d="M2.4 1.6 L6.2 4.9 L2.4 8.2 Z" fill="#fff" stroke="#a9a9a9" stroke-width="1"/></svg>
<svg class="a" style="left:60px;top:554px" width="23" height="21" viewBox="-22.5 -10.5 23 21"><rect x="-18.5" y="-7.5" width="2" height="1" fill="#b85a8c"/><rect x="-18.5" y="-5.5" width="2" height="1" fill="#8c2153"/><rect x="-18.5" y="-3.5" width="2" height="1" fill="#8c2153"/><rect x="-18.5" y="-1.5" width="2" height="1" fill="#b85a8c"/><rect x="-18.5" y="0.5" width="2" height="1" fill="#8c2153"/><rect x="-18.5" y="2.5" width="2" height="1" fill="#8c2153"/><rect x="-18.5" y="4.5" width="2" height="1" fill="#b85a8c"/><rect x="-15.5" y="-7.5" width="2" height="1" fill="#8c2153"/><rect x="-15.5" y="-5.5" width="2" height="1" fill="#8c2153"/><rect x="-15.5" y="-3.5" width="2" height="1" fill="#b85a8c"/><rect x="-15.5" y="-1.5" width="2" height="1" fill="#8c2153"/><rect x="-15.5" y="0.5" width="2" height="1" fill="#8c2153"/><rect x="-15.5" y="2.5" width="2" height="1" fill="#b85a8c"/><rect x="-15.5" y="4.5" width="2" height="1" fill="#8c2153"/><rect x="-12.5" y="-7.5" width="2" height="1" fill="#8c2153"/><rect x="-12.5" y="-5.5" width="2" height="1" fill="#b85a8c"/><rect x="-12.5" y="-3.5" width="2" height="1" fill="#8c2153"/><rect x="-12.5" y="-1.5" width="2" height="1" fill="#8c2153"/><rect x="-12.5" y="0.5" width="2" height="1" fill="#b85a8c"/><rect x="-12.5" y="2.5" width="2" height="1" fill="#8c2153"/><rect x="-12.5" y="4.5" width="2" height="1" fill="#8c2153"/><rect x="-9.5" y="-7.5" width="2" height="1" fill="#d9a0c0"/><rect x="-9.5" y="-5.5" width="2" height="1" fill="#8c2153"/><rect x="-9.5" y="-3.5" width="2" height="1" fill="#d9a0c0"/><rect x="-9.5" y="-1.5" width="2" height="1" fill="#b85a8c"/><rect x="-9.5" y="0.5" width="2" height="1" fill="#d9a0c0"/><rect x="-9.5" y="2.5" width="2" height="1" fill="#8c2153"/><rect x="-9.5" y="4.5" width="2" height="1" fill="#d9a0c0"/></svg>
<div class="pn" style="left:280px;top:2px;width:393px;height:580px"></div>
<div class="a" style="left:281px;top:31px;width:391px;height:1px;background:#d3d7e0"></div>
<div class="tab on" style="left:284.5px;width:57px"></div>
<span class="t" id="x33" style="left:289.8px;top:12px;font-size:13.5px;line-height:20px;height:20px;color:#3f618f;transform:scaleX(0.9450);transform-origin:0 50%;">Settings</span>
<div class="tab off" style="left:349.5px;width:68px"></div>
<span class="t" id="x34" style="left:352.55px;top:10.5px;font-size:13.5px;line-height:20px;height:20px;transform:scaleX(0.9849);transform-origin:0 50%;">Properties</span>
<div class="a" style="left:645.4px;top:18.6px;border-left:4px solid transparent;border-right:4px solid transparent;border-top:5px solid #d0d3da"></div>
<svg class="a" style="left:656.3px;top:10px" width="16.0" height="20" viewBox="656.3 10 16.0 20"><path d="M662.6999999999999 17h4.7v5.3h1.2v1.5h-7.2v-1.5h1.3z" fill="#ccd0d8"/><path d="M664.5 23.8h0.9v3.2h-0.9z" fill="#ccd0d8"/></svg>
<span class="t" id="x35" style="left:286.8px;top:38.5px;font-size:15.5px;line-height:22px;height:22px;color:#51678c;transform:scaleX(0.8970);transform-origin:0 50%;">2D Plot Group</span>
<svg class="a" style="left:286px;top:62px" width="18" height="15" viewBox="286 62 18 15"><rect x="287.6" y="63.6" width="14.8" height="11.8" fill="#f7d9e8" stroke="#5d6a68" stroke-width="1"/><rect x="288.1" y="64.1" width="13.8" height="1.3" fill="#e9eceb"/><path d="M288 65.7h14" stroke="#5d6a68" stroke-width="0.7"/><circle cx="292.3" cy="70.3" r="3.3" fill="#8b1a57"/><path d="M290.2 69.6h2.2v-1.5l2.4 2.2l-2.4 2.2v-1.5h-2.2z" fill="#fff"/><rect x="296.5" y="66.9" width="4.3" height="6.8" fill="#b9266c"/></svg>
<span class="t" id="x36" style="left:306.8px;top:61px;font-size:12.5px;line-height:16px;height:16px;transform:scaleX(1.0025);transform-origin:0 50%;">Plot</span>
<div class="a" style="left:655.2px;top:82.5px;width:17.5px;height:500px;background:#cdcdcd"></div>
<div class="a" style="left:655.2px;top:82.5px;width:17.5px;height:16.5px;background:#f0f0f0"></div>
<svg class="a" style="left:655px;top:82px" width="18" height="18" viewBox="-0.5 -0.5 18 18"><path d="M5 10.5 L8.5 7 L12 10.5" fill="none" stroke="#a0a0a0" stroke-width="1.2"/></svg>
<span class="t" id="x37" style="left:285.55px;top:94.5px;font-size:12.5px;line-height:16px;height:16px;transform:scaleX(0.9130);transform-origin:0 50%;">Label:</span>
<div class="inp" style="left:327px;top:93px;width:294px;height:19px"></div>
<span class="t" id="x38" style="left:329.8px;top:93.5px;font-size:12.5px;line-height:16px;height:16px;transform:scaleX(0.9407);transform-origin:0 50%;">Electric Potential (ec)</span>
<div class="btn" style="left:629px;top:91.5px"></div><svg class="a" style="left:629px;top:91px" width="22" height="23" viewBox="629 91 22 23"><rect x="632.6" y="94.6" width="13.2" height="12.6" fill="#fff" stroke="#5a5a5a" stroke-width="1"/><rect x="633.1" y="95.1" width="12.2" height="2.3" fill="#8d8d8d"/><path d="M636.8 100h6.6 M636.8 102.8h6.6" stroke="#6aa84f" stroke-width="1.1"/><path d="M631.4 109.2 L635.4 105.2" stroke="#2f9a3a" stroke-width="1.5"/><path d="M632.8 104.2h3.8v3.8z" fill="#2f9a3a"/></svg>
<div class="sec" style="top:123.25px;height:24.5px"></div><span class="t" id="x39" style="left:309.8px;top:126.75px;font-size:13.5px;line-height:18px;height:18px;transform:scaleX(0.9411);transform-origin:0 50%;">Data</span><svg class="a" style="left:286px;top:132px" width="11" height="8" viewBox="0 -0.75 11 8"><path d="M0.8 1 L8.6 1 L4.7 5.6 Z" fill="#3c3c3c"/></svg>
<span class="t" id="x40" style="left:285.55px;top:160.5px;font-size:12.5px;line-height:16px;height:16px;transform:scaleX(0.9064);transform-origin:0 50%;">Data set:</span>
<div class="combo" style="left:341.25px;top:158.25px;width:279.5px;height:19.5px"><i style="top:8px;right:5.5px;right:5px;border-left-width:4px;border-right-width:4px;border-top-width:4.5px"></i></div><span class="t" id="x41" style="left:352.8px;top:159.75px;font-size:12.5px;line-height:16px;height:16px;transform:scaleX(0.9515);transform-origin:0 50%;">Study 1/Solution 1 (sol1)</span>
<div class="btn" style="left:629px;top:157.5px"></div><svg class="a" style="left:629px;top:157px" width="23" height="24" viewBox="629 157 23 24"><path d="M633.2 161.8h4.8 M633.2 164.3h4.8 M634.6 166.8h3.6 M634.6 169.3h3.6 M633.2 171.8h4.8 M633.2 174.3h4.8" stroke="#333" stroke-width="0.95"/><path d="M639.6 174.3h5.2v-8.4h-2.8" fill="none" stroke="#4aa040" stroke-width="1.2"/><path d="M639 165.9l3.2-2.8v5.6z" fill="#4aa040"/></svg>
<div class="sec" style="top:191.25px;height:24.5px"></div><span class="t" id="x42" style="left:309.8px;top:194.75px;font-size:13.5px;line-height:18px;height:18px;transform:scaleX(0.9734);transform-origin:0 50%;">Title</span><svg class="a" style="left:287px;top:198px" width="9" height="13" viewBox="0 -0.25 9 13"><path d="M1.5 1.5 L5.8 5.8 L1.5 10.1 Z" fill="#fff" stroke="#a0a0a0" stroke-width="1"/></svg>
<div class="sec" style="top:218.75px;height:24.5px"></div><span class="t" id="x43" style="left:309.8px;top:222.25px;font-size:13.5px;line-height:18px;height:18px;transform:scaleX(0.9545);transform-origin:0 50%;">Plot Settings</span><svg class="a" style="left:286px;top:228px" width="11" height="8" viewBox="0 -0.25 11 8"><path d="M0.8 1 L8.6 1 L4.7 5.6 Z" fill="#3c3c3c"/></svg>
<span class="t" id="x44" style="left:285.55px;top:256.25px;font-size:12.5px;line-height:16px;height:16px;transform:scaleX(0.9425);transform-origin:0 50%;">View:</span>
<div class="combo" style="left:357.25px;top:253.25px;width:263.5px;height:19.5px"><i style="top:8px;right:5.5px;right:5px;border-left-width:4px;border-right-width:4px;border-top-width:4.5px"></i></div><span class="t" id="x45" style="left:368.8px;top:254.75px;font-size:12.5px;line-height:16px;height:16px;transform:scaleX(1.0091);transform-origin:0 50%;">Automatic</span>
<div class="btn" style="left:629px;top:252px"></div><svg class="a" style="left:629px;top:252px" width="23" height="24" viewBox="629 157.5 23 24"><path d="M633.2 161.8h4.8 M633.2 164.3h4.8 M634.6 166.8h3.6 M634.6 169.3h3.6 M633.2 171.8h4.8 M633.2 174.3h4.8" stroke="#333" stroke-width="0.95"/><path d="M639.6 174.3h5.2v-8.4h-2.8" fill="none" stroke="#4aa040" stroke-width="1.2"/><path d="M639 165.9l3.2-2.8v5.6z" fill="#4aa040"/></svg>
<span class="t" id="x46" style="left:285.95px;top:283.25px;font-size:12.5px;line-height:16px;height:16px;transform:scaleX(0.9106);transform-origin:0 50%;">x-axis label:</span>
<div class="cb" style="left:358.2px;top:284px;width:13.5px;height:13px;border-color:#767676"></div>
<div class="inp" style="left:387.5px;top:280.5px;width:262px;height:19px;background:#f9fafd;border-color:#e6e8ee"></div>
<span class="t" id="x47" style="left:285.95px;top:308.25px;font-size:12.5px;line-height:16px;height:16px;transform:scaleX(0.9258);transform-origin:0 50%;">y-axis label:</span>
<div class="cb" style="left:358.2px;top:309px;width:13.5px;height:13px;border-color:#767676"></div>
<div class="inp" style="left:387.5px;top:305.5px;width:262px;height:19px;background:#f9fafd;border-color:#e6e8ee"></div>
<div class="cb" style="left:287.2px;top:332px;width:13.5px;height:13px;border-color:#767676"></div>
<span class="t" id="x48" style="left:305.55px;top:330px;font-size:12.5px;line-height:16px;height:16px;transform:scaleX(0.9587);transform-origin:0 50%;">Show hidden entities</span>
<div class="cb" style="left:287.2px;top:353px;width:13.5px;height:13px;border-color:#767676"></div>
<span class="t" id="x49" style="left:305.55px;top:351.25px;font-size:12.5px;line-height:16px;height:16px;transform:scaleX(0.9683);transform-origin:0 50%;">Propagate hiding to lower dimensions</span>
<div class="grp" style="left:287px;top:385px;width:362px;height:68px"></div>
<div class="a" style="left:296px;top:377px;width:129px;height:16px;background:#f6f8fd"></div>
<div class="cb" style="left:301.2px;top:378.5px;width:13.5px;height:13px;border-color:#5a5a5a"></div><svg class="a" style="left:301px;top:378px" width="14" height="14" viewBox="-0.5 -0.5 14 14"><path d="M2.6 6.4 L5.3 9.6 L10.4 2.8" fill="none" stroke="#111" stroke-width="1.9"/></svg>
<span class="t" id="x50" style="left:319.8px;top:376.25px;font-size:12.5px;line-height:16px;height:16px;transform:scaleX(0.9282);transform-origin:0 50%;">Plot data set edges</span>
<span class="t" id="x51" style="left:296.8px;top:400.25px;font-size:12.5px;line-height:16px;height:16px;transform:scaleX(0.9552);transform-origin:0 50%;">Color:</span>
<div class="combo" style="left:343.25px;top:398.5px;width:296px;height:19.5px"><i style="top:8px;right:5.5px;right:5px;border-left-width:4px;border-right-width:4px;border-top-width:4.5px"></i></div><span class="t" id="x52" style="left:354.8px;top:400px;font-size:12.5px;line-height:16px;height:16px;transform:scaleX(0.9353);transform-origin:0 50%;">Black</span>
<span class="t" id="x53" style="left:296.8px;top:426.5px;font-size:12.5px;line-height:16px;height:16px;transform:scaleX(0.9118);transform-origin:0 50%;">Frame:</span>
<div class="combo" style="left:343.25px;top:424.25px;width:296px;height:19.5px"><i style="top:8px;right:5.5px;right:5px;border-left-width:4px;border-right-width:4px;border-top-width:4.5px"></i></div><span class="t" id="x54" style="left:354.8px;top:425.75px;font-size:12.5px;line-height:16px;height:16px;transform:scaleX(0.9077);transform-origin:0 50%;">Spatial  (x, y, z)</span>
<div class="sec" style="top:464.5px;height:24.5px"></div><span class="t" id="x55" style="left:309.8px;top:468px;font-size:13.5px;line-height:18px;height:18px;transform:scaleX(0.9789);transform-origin:0 50%;">Color Legend</span><svg class="a" style="left:286px;top:474px" width="11" height="8" viewBox="0 -0 11 8"><path d="M0.8 1 L8.6 1 L4.7 5.6 Z" fill="#3c3c3c"/></svg>
<div class="grp" style="left:287px;top:510px;width:362px;height:90px"></div>
<div class="a" style="left:296px;top:502px;width:103px;height:16px;background:#f6f8fd"></div>
<div class="cb" style="left:301.2px;top:503.5px;width:13.5px;height:13px;border-color:#5a5a5a"></div><svg class="a" style="left:301px;top:503px" width="14" height="14" viewBox="-0.5 -0.5 14 14"><path d="M2.6 6.4 L5.3 9.6 L10.4 2.8" fill="none" stroke="#111" stroke-width="1.9"/></svg>
<span class="t" id="x56" style="left:319.8px;top:501.25px;font-size:12.5px;line-height:16px;height:16px;transform:scaleX(0.9308);transform-origin:0 50%;">Show legends</span>
<div class="cb" style="left:298.2px;top:524px;width:13.5px;height:13px;border-color:#767676"></div>
<span class="t" id="x57" style="left:316.8px;top:522px;font-size:12.5px;line-height:16px;height:16px;transform:scaleX(0.9738);transform-origin:0 50%;">Show maximum and minimum values</span>
<div class="cb" style="left:298.2px;top:545px;width:13.5px;height:13px;border-color:#767676"></div>
<span class="t" id="x58" style="left:316.8px;top:543px;font-size:12.5px;line-height:16px;height:16px;transform:scaleX(0.9500);transform-origin:0 50%;">Show units</span>
<span class="t" id="x59" style="left:296.8px;top:568.3px;font-size:12.5px;line-height:16px;height:16px;transform:scaleX(1.0031);transform-origin:0 50%;">Position:</span>
<div class="combo" style="left:361.25px;top:565px;width:278px;height:19.5px"><i style="top:8px;right:5.5px;right:5px;border-left-width:4px;border-right-width:4px;border-top-width:4.5px"></i></div><span class="t" id="x60" style="left:372.8px;top:567.3px;font-size:12.5px;line-height:16px;height:16px;transform:scaleX(0.9970);transform-origin:0 50%;">Right</span>
<div class="pn" style="left:678.5px;top:2px;width:452px;height:517px"></div>
<span class="t" id="x61" style="left:685.55px;top:8.5px;font-size:20.5px;line-height:26px;height:26px;color:#5875a3;transform:scaleX(0.9186);transform-origin:0 50%;">Graphics</span>
<div class="a" style="left:1103px;top:17.6px;border-left:4px solid transparent;border-right:4px solid transparent;border-top:5px solid #d0d3da"></div>
<svg class="a" style="left:1113.3px;top:10px" width="16.0" height="20" viewBox="1113.3 10 16.0 20"><path d="M1119.6999999999998 17h4.7v5.3h1.2v1.5h-7.2v-1.5h1.3z" fill="#ccd0d8"/><path d="M1121.5 23.8h0.9v3.2h-0.9z" fill="#ccd0d8"/></svg>
<svg class="a" style="left:680px;top:34px" width="270" height="24" viewBox="680 34 270 24"><circle cx="691.6" cy="43.6" r="4.4" fill="none" stroke="#2f3d55" stroke-width="1.5"/><path d="M694.8 46.8 L699 51.2" stroke="#2f3d55" stroke-width="2.3" stroke-linecap="round"/><path d="M689.0 43.6h5.2 M691.6 41.0v5.2" stroke="#2f3d55" stroke-width="1.2"/><circle cx="715.8" cy="43.6" r="4.4" fill="none" stroke="#2f3d55" stroke-width="1.5"/><path d="M719.0 46.8 L723.2 51.2" stroke="#2f3d55" stroke-width="2.3" stroke-linecap="round"/><path d="M713.1999999999999 43.6h5.2" stroke="#2f3d55" stroke-width="1.2"/><rect x="733.6" y="43.6" width="7.8" height="6.6" fill="none" stroke="#2f3d55" stroke-width="1.1" stroke-dasharray="1.8 1.2"/><circle cx="741.6" cy="43" r="4.3" fill="#f6f8fd"/><circle cx="741.6" cy="43" r="4.3" fill="none" stroke="#2f3d55" stroke-width="1.5"/><path d="M744.7 46.1 L748.6 50.8" stroke="#2f3d55" stroke-width="2.3" stroke-linecap="round"/><path d="M739.0 43h5.2 M741.6 40.4v5.2" stroke="#2f3d55" stroke-width="1.2"/><rect x="757.9" y="37.6" width="13.4" height="13.4" fill="#fbfcfe" stroke="#4d5d74" stroke-width="1.2"/><path d="M761.9 44.3h5.4 M764.6 41.6v5.4" stroke="#4d5d74" stroke-width="1.1"/><path d="M764.6 38.6l1.6 1.9h-3.2z M764.6 50l1.6 -1.9h-3.2z M759 44.3l1.9 -1.6v3.2z M770.2 44.3l-1.9 -1.6v3.2z" fill="#8c99ab"/><path d="M783.6 37.5V53 M890.4 37.5V53" stroke="#d3d7df" stroke-width="1"/><path d="M803.3 50.2V39" stroke="#4f6d8c" stroke-width="1.1"/><path d="M803.3 37.8l1.5 2.4h-3z" fill="#4f6d8c"/><path d="M803.3 50.2L798 45.3" stroke="#3fa653" stroke-width="1.1"/><path d="M796.8 44.2l2.9 0.6l-2 2.1z" fill="#3fa653"/><path d="M803.3 50.2L811.8 45" stroke="#d3305f" stroke-width="1.1"/><path d="M813.3 44.1l-1.6 2.6l-1.4-2.2z" fill="#d3305f"/><path d="M821.1 43.3h7l-3.5 3.6z" fill="#111"/><rect x="839.7" y="36.8" width="16.4" height="16.4" rx="2" fill="#cfe1f7" stroke="#3f5f8f" stroke-width="1.3"/><rect x="841.4" y="38.2" width="13" height="1.8" fill="#3f5f8f"/><rect x="843.1" y="41.4" width="2.7" height="2.6" fill="#fff" stroke="#5b7db0" stroke-width="0.7"/><rect x="843.1" y="44.7" width="2.7" height="2.6" fill="#fff" stroke="#5b7db0" stroke-width="0.7"/><rect x="843.1" y="48.0" width="2.7" height="2.6" fill="#fff" stroke="#5b7db0" stroke-width="0.7"/><rect x="846.5" y="41.4" width="2.7" height="2.6" fill="#fff" stroke="#5b7db0" stroke-width="0.7"/><rect x="846.5" y="44.7" width="2.7" height="2.6" fill="#fff" stroke="#5b7db0" stroke-width="0.7"/><rect x="846.5" y="48.0" width="2.7" height="2.6" fill="#fff" stroke="#5b7db0" stroke-width="0.7"/><rect x="849.9" y="41.4" width="2.7" height="2.6" fill="#fff" stroke="#5b7db0" stroke-width="0.7"/><rect x="849.9" y="44.7" width="2.7" height="2.6" fill="#fff" stroke="#5b7db0" stroke-width="0.7"/><rect x="849.9" y="48.0" width="2.7" height="2.6" fill="#fff" stroke="#5b7db0" stroke-width="0.7"/><rect x="863.9" y="36.8" width="16.4" height="16.4" rx="2" fill="#cfe1f7" stroke="#3f5f8f" stroke-width="1.3"/><rect x="865.6" y="38.2" width="13" height="1.8" fill="#3f5f8f"/><rect x="866" y="40.6" width="7.6" height="10.8" fill="#e4eefb"/><defs><linearGradient id="lgb" x1="0" y1="0" x2="0" y2="1"><stop offset="0" stop-color="#f0a030"/><stop offset=".55" stop-color="#e04030"/><stop offset="1" stop-color="#5050c0"/></linearGradient></defs><rect x="874.6" y="40.8" width="2.6" height="10.2" fill="url(#lgb)"/><path d="M904.3 42h3.2l1.3-1.8h5.2l1.3 1.8h4.4v8.6h-15.4z" fill="#3d6aa8"/><circle cx="912.3" cy="46.1" r="3.1" fill="#fff"/><circle cx="912.3" cy="46.1" r="1.7" fill="#3d6aa8"/><rect x="932" y="37.3" width="8" height="6.5" fill="#fff" stroke="#3d6aa8" stroke-width="1.1"/><rect x="929.2" y="43" width="13.7" height="7.2" rx="0.8" fill="#3d6aa8"/><rect x="932" y="48.4" width="8" height="4.3" fill="#fff" stroke="#3d6aa8" stroke-width="1.1"/><rect x="938.6" y="45" width="2.4" height="1" fill="#fff"/></svg>
<div class="a" style="left:679.5px;top:58px;width:450px;height:460px;background:#fff"></div>
<svg class="a" style="left:1102px;top:62px" width="24" height="22" viewBox="1102 62 24 22"><defs><linearGradient id="cig" x1="0" y1="0" x2="1" y2="0"><stop offset="0" stop-color="#f6e24a"/><stop offset=".42" stop-color="#9bd89a"/><stop offset=".75" stop-color="#2f86d2"/><stop offset="1" stop-color="#1b3c9c"/></linearGradient></defs><ellipse cx="1114" cy="72.6" rx="9.8" ry="7.8" fill="#ededf1"/><rect x="1107.2" y="67.1" width="13.6" height="10.8" rx="2.6" fill="#1c2f86"/><rect x="1109.6" y="69.3" width="9.6" height="6.6" rx="1" fill="url(#cig)"/></svg>
<svg class="a" style="left:679px;top:58px" width="451" height="460" viewBox="679 58 451 460" font-family='"DejaVu Sans",sans-serif' font-size="12">
<text x="883.2" y="84.3" text-anchor="middle" font-size="12.6">Surface: Electric potential (V)</text>
<defs><linearGradient id="g0" gradientUnits="userSpaceOnUse" x1="0" y1="191.24" x2="0" y2="387.36"><stop offset="0.0000" stop-color="#800000"/><stop offset="0.0764" stop-color="#8f0000"/><stop offset="0.1702" stop-color="#ff0000"/><stop offset="0.2513" stop-color="#ff6100"/><stop offset="0.4012" stop-color="#fff000"/><stop offset="0.4062" stop-color="#ffff00"/><stop offset="0.4248" stop-color="#c7ff38"/><stop offset="0.5747" stop-color="#38ffc7"/><stop offset="0.5932" stop-color="#00ffff"/><stop offset="0.5983" stop-color="#00f0ff"/><stop offset="0.7482" stop-color="#0061ff"/><stop offset="0.8295" stop-color="#0000ff"/><stop offset="0.9236" stop-color="#00008f"/><stop offset="1.0000" stop-color="#000080"/></linearGradient><linearGradient id="g1" gradientUnits="userSpaceOnUse" x1="0" y1="165.21" x2="0" y2="413.39"><stop offset="0.0000" stop-color="#800000"/><stop offset="0.0478" stop-color="#8f0000"/><stop offset="0.1377" stop-color="#ff0000"/><stop offset="0.1663" stop-color="#ff2400"/><stop offset="0.2848" stop-color="#ff8a00"/><stop offset="0.3034" stop-color="#ffb200"/><stop offset="0.4145" stop-color="#ffff00"/><stop offset="0.4219" stop-color="#faff05"/><stop offset="0.4406" stop-color="#bdff42"/><stop offset="0.5590" stop-color="#42ffbd"/><stop offset="0.5777" stop-color="#05fffa"/><stop offset="0.5851" stop-color="#00ffff"/><stop offset="0.6962" stop-color="#00b2ff"/><stop offset="0.7148" stop-color="#008aff"/><stop offset="0.8333" stop-color="#0024ff"/><stop offset="0.8620" stop-color="#0000ff"/><stop offset="0.9522" stop-color="#00008f"/><stop offset="1.0000" stop-color="#000080"/></linearGradient><linearGradient id="g2" gradientUnits="userSpaceOnUse" x1="0" y1="157.6" x2="0" y2="426.65"><stop offset="0.0000" stop-color="#800000"/><stop offset="0.0427" stop-color="#8f0000"/><stop offset="0.0552" stop-color="#d10000"/><stop offset="0.1645" stop-color="#fa0000"/><stop offset="0.1659" stop-color="#ff0000"/><stop offset="0.1817" stop-color="#ff3800"/><stop offset="0.2910" stop-color="#ff8a00"/><stop offset="0.3082" stop-color="#ffb200"/><stop offset="0.4106" stop-color="#ffff00"/><stop offset="0.4175" stop-color="#faff05"/><stop offset="0.4347" stop-color="#bdff42"/><stop offset="0.5439" stop-color="#42ffbd"/><stop offset="0.5612" stop-color="#05fffa"/><stop offset="0.5680" stop-color="#00ffff"/><stop offset="0.6704" stop-color="#00b2ff"/><stop offset="0.6876" stop-color="#008aff"/><stop offset="0.7969" stop-color="#0038ff"/><stop offset="0.8127" stop-color="#0000ff"/><stop offset="0.8141" stop-color="#0000fa"/><stop offset="0.9234" stop-color="#0000d1"/><stop offset="0.9599" stop-color="#00008f"/><stop offset="1.0000" stop-color="#000080"/></linearGradient><linearGradient id="g3" gradientUnits="userSpaceOnUse" x1="0" y1="157.6" x2="0" y2="430.8"><stop offset="0.0000" stop-color="#800000"/><stop offset="0.0421" stop-color="#8f0000"/><stop offset="0.0544" stop-color="#d10000"/><stop offset="0.1620" stop-color="#fa0000"/><stop offset="0.1634" stop-color="#ff0000"/><stop offset="0.1790" stop-color="#ff3800"/><stop offset="0.2866" stop-color="#ff8a00"/><stop offset="0.3035" stop-color="#ffb200"/><stop offset="0.4044" stop-color="#ffff00"/><stop offset="0.4111" stop-color="#faff05"/><stop offset="0.4281" stop-color="#bdff42"/><stop offset="0.5357" stop-color="#42ffbd"/><stop offset="0.5526" stop-color="#05fffa"/><stop offset="0.5594" stop-color="#00ffff"/><stop offset="0.6602" stop-color="#00b2ff"/><stop offset="0.6772" stop-color="#008aff"/><stop offset="0.7848" stop-color="#0038ff"/><stop offset="0.8003" stop-color="#0000ff"/><stop offset="0.8018" stop-color="#0000fa"/><stop offset="0.9094" stop-color="#0000d1"/><stop offset="0.9616" stop-color="#00008f"/><stop offset="1.0000" stop-color="#000080"/></linearGradient><linearGradient id="g4" gradientUnits="userSpaceOnUse" x1="0" y1="157.6" x2="0" y2="426.65"><stop offset="0.0000" stop-color="#800000"/><stop offset="0.0427" stop-color="#8f0000"/><stop offset="0.0552" stop-color="#d10000"/><stop offset="0.1645" stop-color="#fa0000"/><stop offset="0.1659" stop-color="#ff0000"/><stop offset="0.1817" stop-color="#ff3800"/><stop offset="0.2910" stop-color="#ff8a00"/><stop offset="0.3082" stop-color="#ffb200"/><stop offset="0.4106" stop-color="#ffff00"/><stop offset="0.4175" stop-color="#faff05"/><stop offset="0.4347" stop-color="#bdff42"/><stop offset="0.5439" stop-color="#42ffbd"/><stop offset="0.5612" stop-color="#05fffa"/><stop offset="0.5680" stop-color="#00ffff"/><stop offset="0.6704" stop-color="#00b2ff"/><stop offset="0.6876" stop-color="#008aff"/><stop offset="0.7969" stop-color="#0038ff"/><stop offset="0.8127" stop-color="#0000ff"/><stop offset="0.8141" stop-color="#0000fa"/><stop offset="0.9234" stop-color="#0000d1"/><stop offset="0.9599" stop-color="#00008f"/><stop offset="1.0000" stop-color="#000080"/></linearGradient><linearGradient id="g5" gradientUnits="userSpaceOnUse" x1="0" y1="165.21" x2="0" y2="413.39"><stop offset="0.0000" stop-color="#800000"/><stop offset="0.0478" stop-color="#8f0000"/><stop offset="0.1377" stop-color="#ff0000"/><stop offset="0.1663" stop-color="#ff2400"/><stop offset="0.2848" stop-color="#ff8a00"/><stop offset="0.3034" stop-color="#ffb200"/><stop offset="0.4145" stop-color="#ffff00"/><stop offset="0.4219" stop-color="#faff05"/><stop offset="0.4406" stop-color="#bdff42"/><stop offset="0.5590" stop-color="#42ffbd"/><stop offset="0.5777" stop-color="#05fffa"/><stop offset="0.5851" stop-color="#00ffff"/><stop offset="0.6962" stop-color="#00b2ff"/><stop offset="0.7148" stop-color="#008aff"/><stop offset="0.8333" stop-color="#0024ff"/><stop offset="0.8620" stop-color="#0000ff"/><stop offset="0.9522" stop-color="#00008f"/><stop offset="1.0000" stop-color="#000080"/></linearGradient><linearGradient id="g6" gradientUnits="userSpaceOnUse" x1="0" y1="191.24" x2="0" y2="387.36"><stop offset="0.0000" stop-color="#800000"/><stop offset="0.0764" stop-color="#8f0000"/><stop offset="0.1702" stop-color="#ff0000"/><stop offset="0.2513" stop-color="#ff6100"/><stop offset="0.4012" stop-color="#fff000"/><stop offset="0.4062" stop-color="#ffff00"/><stop offset="0.4248" stop-color="#c7ff38"/><stop offset="0.5747" stop-color="#38ffc7"/><stop offset="0.5932" stop-color="#00ffff"/><stop offset="0.5983" stop-color="#00f0ff"/><stop offset="0.7482" stop-color="#0061ff"/><stop offset="0.8295" stop-color="#0000ff"/><stop offset="0.9236" stop-color="#00008f"/><stop offset="1.0000" stop-color="#000080"/></linearGradient></defs>
<path d="M747.75 244.2 A141.9 141.5 0 0 1 830.36 157.6 L934.14 157.6 A141.9 141.5 0 0 1 1016.75 244.2 L1006.96 244.2 A132.7 132.0 0 0 0 934.82 168.1 L829.68 168.1 A132.7 132.0 0 0 0 757.54 244.2 Z" fill="#8c0000" stroke="#1a0000" stroke-width="0.9"/>
<path d="M749.02 338.0 A141.9 141.5 0 0 0 1015.48 338.0 L1005.59 338.0 A132.7 132.0 0 0 1 758.91 338.0 Z" fill="#00008c" stroke="#00001a" stroke-width="0.9"/>
<path d="M747.75 244.2 A141.9 141.5 0 0 0 749.02 338.0" fill="none" stroke="#111" stroke-width="0.9"/>
<path d="M757.54 244.2 A132.7 132.0 0 0 0 758.91 338.0" fill="none" stroke="#111" stroke-width="0.9"/>
<path d="M1016.75 244.2 A141.9 141.5 0 0 1 1015.48 338.0" fill="none" stroke="#111" stroke-width="0.9"/>
<path d="M1006.96 244.2 A132.7 132.0 0 0 1 1005.59 338.0" fill="none" stroke="#111" stroke-width="0.9"/>
<path d="M830.36 157.6 V168.1 M934.14 157.6 V168.1" stroke="#1a0000" stroke-width="0.8"/>
<path d="M775.3 199.92 H784.6 V240.52 H775.3 Z M775.3 378.68 H784.6 V337.98 H775.3 Z" fill="url(#g0)" stroke="#111" stroke-width="0.8"/>
<rect x="775.7" y="269.42" width="8.5" height="5.63" fill="url(#g0)"/>
<rect x="775.7" y="303.45" width="8.5" height="5.63" fill="url(#g0)"/>
<path d="M775.7 269.92 V274.55 M784.2 269.92 V274.55 M775.7 303.95 V308.58 M784.2 303.95 V308.58" stroke="#111" stroke-width="0.8" fill="none"/>
<rect x="766.1" y="240.52" width="27.7" height="29.4" rx="0.8" fill="url(#g0)" stroke="#111" stroke-width="1.1"/>
<rect x="766.1" y="274.55" width="27.7" height="29.4" rx="0.8" fill="url(#g0)" stroke="#111" stroke-width="1.1"/>
<rect x="766.1" y="308.58" width="27.7" height="29.4" rx="0.8" fill="url(#g0)" stroke="#111" stroke-width="1.1"/>
<path d="M809.4 173.42 H818.7 V206.49 H809.4 Z M809.4 405.18 H818.7 V372.01 H809.4 Z" fill="url(#g1)" stroke="#111" stroke-width="0.8"/>
<rect x="809.8" y="235.39" width="8.5" height="5.63" fill="url(#g1)"/>
<rect x="809.8" y="269.42" width="8.5" height="5.63" fill="url(#g1)"/>
<rect x="809.8" y="303.45" width="8.5" height="5.63" fill="url(#g1)"/>
<rect x="809.8" y="337.48" width="8.5" height="5.63" fill="url(#g1)"/>
<path d="M809.8 235.89 V240.52 M818.3 235.89 V240.52 M809.8 269.92 V274.55 M818.3 269.92 V274.55 M809.8 303.95 V308.58 M818.3 303.95 V308.58 M809.8 337.98 V342.61 M818.3 337.98 V342.61" stroke="#111" stroke-width="0.8" fill="none"/>
<rect x="800.2" y="206.49" width="27.7" height="29.4" rx="0.8" fill="url(#g1)" stroke="#111" stroke-width="1.1"/>
<rect x="800.2" y="240.52" width="27.7" height="29.4" rx="0.8" fill="url(#g1)" stroke="#111" stroke-width="1.1"/>
<rect x="800.2" y="274.55" width="27.7" height="29.4" rx="0.8" fill="url(#g1)" stroke="#111" stroke-width="1.1"/>
<rect x="800.2" y="308.58" width="27.7" height="29.4" rx="0.8" fill="url(#g1)" stroke="#111" stroke-width="1.1"/>
<rect x="800.2" y="342.61" width="27.7" height="29.4" rx="0.8" fill="url(#g1)" stroke="#111" stroke-width="1.1"/>
<path d="M843.5 415.05 V416.15 L852.8 418.61 V415.05 Z" fill="#00008c"/>
<path d="M843.5 168.1 V172.46 H852.8 V168.1 M843.5 406.04 V415.55 H852.8 V406.04" fill="url(#g2)" stroke="#111" stroke-width="0.8"/>
<rect x="843.9" y="201.36" width="8.5" height="5.63" fill="url(#g2)"/>
<rect x="843.9" y="235.39" width="8.5" height="5.63" fill="url(#g2)"/>
<rect x="843.9" y="269.42" width="8.5" height="5.63" fill="url(#g2)"/>
<rect x="843.9" y="303.45" width="8.5" height="5.63" fill="url(#g2)"/>
<rect x="843.9" y="337.48" width="8.5" height="5.63" fill="url(#g2)"/>
<rect x="843.9" y="371.51" width="8.5" height="5.63" fill="url(#g2)"/>
<path d="M843.9 201.86 V206.49 M852.4 201.86 V206.49 M843.9 235.89 V240.52 M852.4 235.89 V240.52 M843.9 269.92 V274.55 M852.4 269.92 V274.55 M843.9 303.95 V308.58 M852.4 303.95 V308.58 M843.9 337.98 V342.61 M852.4 337.98 V342.61 M843.9 372.01 V376.64 M852.4 372.01 V376.64" stroke="#111" stroke-width="0.8" fill="none"/>
<rect x="834.3" y="172.46" width="27.7" height="29.4" rx="0.8" fill="url(#g2)" stroke="#111" stroke-width="1.1"/>
<rect x="834.3" y="206.49" width="27.7" height="29.4" rx="0.8" fill="url(#g2)" stroke="#111" stroke-width="1.1"/>
<rect x="834.3" y="240.52" width="27.7" height="29.4" rx="0.8" fill="url(#g2)" stroke="#111" stroke-width="1.1"/>
<rect x="834.3" y="274.55" width="27.7" height="29.4" rx="0.8" fill="url(#g2)" stroke="#111" stroke-width="1.1"/>
<rect x="834.3" y="308.58" width="27.7" height="29.4" rx="0.8" fill="url(#g2)" stroke="#111" stroke-width="1.1"/>
<rect x="834.3" y="342.61" width="27.7" height="29.4" rx="0.8" fill="url(#g2)" stroke="#111" stroke-width="1.1"/>
<rect x="834.3" y="376.64" width="27.7" height="29.4" rx="0.8" fill="url(#g2)" stroke="#111" stroke-width="1.1"/>
<path d="M877.6 420.72 V421.82 L886.9 421.82 V420.72 Z" fill="#00008c"/>
<path d="M877.6 168.1 V172.46 H886.9 V168.1 M877.6 406.04 V421.22 H886.9 V406.04" fill="url(#g3)" stroke="#111" stroke-width="0.8"/>
<rect x="878" y="201.36" width="8.5" height="5.63" fill="url(#g3)"/>
<rect x="878" y="235.39" width="8.5" height="5.63" fill="url(#g3)"/>
<rect x="878" y="269.42" width="8.5" height="5.63" fill="url(#g3)"/>
<rect x="878" y="303.45" width="8.5" height="5.63" fill="url(#g3)"/>
<rect x="878" y="337.48" width="8.5" height="5.63" fill="url(#g3)"/>
<rect x="878" y="371.51" width="8.5" height="5.63" fill="url(#g3)"/>
<path d="M878 201.86 V206.49 M886.5 201.86 V206.49 M878 235.89 V240.52 M886.5 235.89 V240.52 M878 269.92 V274.55 M886.5 269.92 V274.55 M878 303.95 V308.58 M886.5 303.95 V308.58 M878 337.98 V342.61 M886.5 337.98 V342.61 M878 372.01 V376.64 M886.5 372.01 V376.64" stroke="#111" stroke-width="0.8" fill="none"/>
<rect x="868.4" y="172.46" width="27.7" height="29.4" rx="0.8" fill="url(#g3)" stroke="#111" stroke-width="1.1"/>
<rect x="868.4" y="206.49" width="27.7" height="29.4" rx="0.8" fill="url(#g3)" stroke="#111" stroke-width="1.1"/>
<rect x="868.4" y="240.52" width="27.7" height="29.4" rx="0.8" fill="url(#g3)" stroke="#111" stroke-width="1.1"/>
<rect x="868.4" y="274.55" width="27.7" height="29.4" rx="0.8" fill="url(#g3)" stroke="#111" stroke-width="1.1"/>
<rect x="868.4" y="308.58" width="27.7" height="29.4" rx="0.8" fill="url(#g3)" stroke="#111" stroke-width="1.1"/>
<rect x="868.4" y="342.61" width="27.7" height="29.4" rx="0.8" fill="url(#g3)" stroke="#111" stroke-width="1.1"/>
<rect x="868.4" y="376.64" width="27.7" height="29.4" rx="0.8" fill="url(#g3)" stroke="#111" stroke-width="1.1"/>
<path d="M911.7 415.05 V418.61 L921 416.15 V415.05 Z" fill="#00008c"/>
<path d="M911.7 168.1 V172.46 H921 V168.1 M911.7 406.04 V415.55 H921 V406.04" fill="url(#g4)" stroke="#111" stroke-width="0.8"/>
<rect x="912.1" y="201.36" width="8.5" height="5.63" fill="url(#g4)"/>
<rect x="912.1" y="235.39" width="8.5" height="5.63" fill="url(#g4)"/>
<rect x="912.1" y="269.42" width="8.5" height="5.63" fill="url(#g4)"/>
<rect x="912.1" y="303.45" width="8.5" height="5.63" fill="url(#g4)"/>
<rect x="912.1" y="337.48" width="8.5" height="5.63" fill="url(#g4)"/>
<rect x="912.1" y="371.51" width="8.5" height="5.63" fill="url(#g4)"/>
<path d="M912.1 201.86 V206.49 M920.6 201.86 V206.49 M912.1 235.89 V240.52 M920.6 235.89 V240.52 M912.1 269.92 V274.55 M920.6 269.92 V274.55 M912.1 303.95 V308.58 M920.6 303.95 V308.58 M912.1 337.98 V342.61 M920.6 337.98 V342.61 M912.1 372.01 V376.64 M920.6 372.01 V376.64" stroke="#111" stroke-width="0.8" fill="none"/>
<rect x="902.5" y="172.46" width="27.7" height="29.4" rx="0.8" fill="url(#g4)" stroke="#111" stroke-width="1.1"/>
<rect x="902.5" y="206.49" width="27.7" height="29.4" rx="0.8" fill="url(#g4)" stroke="#111" stroke-width="1.1"/>
<rect x="902.5" y="240.52" width="27.7" height="29.4" rx="0.8" fill="url(#g4)" stroke="#111" stroke-width="1.1"/>
<rect x="902.5" y="274.55" width="27.7" height="29.4" rx="0.8" fill="url(#g4)" stroke="#111" stroke-width="1.1"/>
<rect x="902.5" y="308.58" width="27.7" height="29.4" rx="0.8" fill="url(#g4)" stroke="#111" stroke-width="1.1"/>
<rect x="902.5" y="342.61" width="27.7" height="29.4" rx="0.8" fill="url(#g4)" stroke="#111" stroke-width="1.1"/>
<rect x="902.5" y="376.64" width="27.7" height="29.4" rx="0.8" fill="url(#g4)" stroke="#111" stroke-width="1.1"/>
<path d="M945.8 173.42 H955.1 V206.49 H945.8 Z M945.8 405.18 H955.1 V372.01 H945.8 Z" fill="url(#g5)" stroke="#111" stroke-width="0.8"/>
<rect x="946.2" y="235.39" width="8.5" height="5.63" fill="url(#g5)"/>
<rect x="946.2" y="269.42" width="8.5" height="5.63" fill="url(#g5)"/>
<rect x="946.2" y="303.45" width="8.5" height="5.63" fill="url(#g5)"/>
<rect x="946.2" y="337.48" width="8.5" height="5.63" fill="url(#g5)"/>
<path d="M946.2 235.89 V240.52 M954.7 235.89 V240.52 M946.2 269.92 V274.55 M954.7 269.92 V274.55 M946.2 303.95 V308.58 M954.7 303.95 V308.58 M946.2 337.98 V342.61 M954.7 337.98 V342.61" stroke="#111" stroke-width="0.8" fill="none"/>
<rect x="936.6" y="206.49" width="27.7" height="29.4" rx="0.8" fill="url(#g5)" stroke="#111" stroke-width="1.1"/>
<rect x="936.6" y="240.52" width="27.7" height="29.4" rx="0.8" fill="url(#g5)" stroke="#111" stroke-width="1.1"/>
<rect x="936.6" y="274.55" width="27.7" height="29.4" rx="0.8" fill="url(#g5)" stroke="#111" stroke-width="1.1"/>
<rect x="936.6" y="308.58" width="27.7" height="29.4" rx="0.8" fill="url(#g5)" stroke="#111" stroke-width="1.1"/>
<rect x="936.6" y="342.61" width="27.7" height="29.4" rx="0.8" fill="url(#g5)" stroke="#111" stroke-width="1.1"/>
<path d="M979.9 199.92 H989.2 V240.52 H979.9 Z M979.9 378.68 H989.2 V337.98 H979.9 Z" fill="url(#g6)" stroke="#111" stroke-width="0.8"/>
<rect x="980.3" y="269.42" width="8.5" height="5.63" fill="url(#g6)"/>
<rect x="980.3" y="303.45" width="8.5" height="5.63" fill="url(#g6)"/>
<path d="M980.3 269.92 V274.55 M988.8 269.92 V274.55 M980.3 303.95 V308.58 M988.8 303.95 V308.58" stroke="#111" stroke-width="0.8" fill="none"/>
<rect x="970.7" y="240.52" width="27.7" height="29.4" rx="0.8" fill="url(#g6)" stroke="#111" stroke-width="1.1"/>
<rect x="970.7" y="274.55" width="27.7" height="29.4" rx="0.8" fill="url(#g6)" stroke="#111" stroke-width="1.1"/>
<rect x="970.7" y="308.58" width="27.7" height="29.4" rx="0.8" fill="url(#g6)" stroke="#111" stroke-width="1.1"/>
<rect x="771.5" y="247" width="17" height="16.6" fill="#080808"/>
<rect x="771.5" y="281" width="17" height="16.6" fill="#080808"/>
<rect x="771.5" y="315" width="17" height="16.6" fill="#080808"/>
<rect x="805.5" y="213" width="17" height="16.6" fill="#080808"/>
<rect x="805.5" y="247" width="17" height="16.6" fill="#080808"/>
<rect x="805.5" y="281" width="17" height="16.6" fill="#080808"/>
<rect x="805.5" y="315" width="17" height="16.6" fill="#080808"/>
<rect x="805.5" y="349" width="17" height="16.6" fill="#080808"/>
<rect x="839.5" y="179" width="17" height="16.6" fill="#080808"/>
<rect x="839.5" y="213" width="17" height="16.6" fill="#080808"/>
<rect x="839.5" y="247" width="17" height="16.6" fill="#080808"/>
<rect x="839.5" y="281" width="17" height="16.6" fill="#080808"/>
<rect x="839.5" y="315" width="17" height="16.6" fill="#080808"/>
<rect x="839.5" y="349" width="17" height="16.6" fill="#080808"/>
<rect x="839.5" y="383" width="17" height="16.6" fill="#080808"/>
<rect x="874" y="179" width="17" height="16.6" fill="#080808"/>
<rect x="874" y="213" width="17" height="16.6" fill="#080808"/>
<rect x="874" y="247" width="17" height="16.6" fill="#080808"/>
<rect x="874" y="281" width="17" height="16.6" fill="#080808"/>
<rect x="874" y="315" width="17" height="16.6" fill="#080808"/>
<rect x="874" y="349" width="17" height="16.6" fill="#080808"/>
<rect x="874" y="383" width="17" height="16.6" fill="#080808"/>
<rect x="908" y="179" width="17" height="16.6" fill="#080808"/>
<rect x="908" y="213" width="17" height="16.6" fill="#080808"/>
<rect x="908" y="247" width="17" height="16.6" fill="#080808"/>
<rect x="908" y="281" width="17" height="16.6" fill="#080808"/>
<rect x="908" y="315" width="17" height="16.6" fill="#080808"/>
<rect x="908" y="349" width="17" height="16.6" fill="#080808"/>
<rect x="908" y="383" width="17" height="16.6" fill="#080808"/>
<rect x="942" y="213" width="17" height="16.6" fill="#080808"/>
<rect x="942" y="247" width="17" height="16.6" fill="#080808"/>
<rect x="942" y="281" width="17" height="16.6" fill="#080808"/>
<rect x="942" y="315" width="17" height="16.6" fill="#080808"/>
<rect x="942" y="349" width="17" height="16.6" fill="#080808"/>
<rect x="976" y="247" width="17" height="16.6" fill="#080808"/>
<rect x="976" y="281" width="17" height="16.6" fill="#080808"/>
<rect x="976" y="315" width="17" height="16.6" fill="#080808"/>
<path d="M772.6 248h3.5v3.4h-3.5zM772.6 253.6h3.5v3.4h-3.5zM772.6 259.2h3.5v3.4h-3.5zM778.25 248h3.5v3.4h-3.5zM778.25 253.6h3.5v3.4h-3.5zM778.25 259.2h3.5v3.4h-3.5zM783.9 248h3.5v3.4h-3.5zM783.9 253.6h3.5v3.4h-3.5zM783.9 259.2h3.5v3.4h-3.5zM772.6 282h3.5v3.4h-3.5zM772.6 287.6h3.5v3.4h-3.5zM772.6 293.2h3.5v3.4h-3.5zM778.25 282h3.5v3.4h-3.5zM778.25 287.6h3.5v3.4h-3.5zM778.25 293.2h3.5v3.4h-3.5zM783.9 282h3.5v3.4h-3.5zM783.9 287.6h3.5v3.4h-3.5zM783.9 293.2h3.5v3.4h-3.5zM772.6 316h3.5v3.4h-3.5zM772.6 321.6h3.5v3.4h-3.5zM772.6 327.2h3.5v3.4h-3.5zM778.25 316h3.5v3.4h-3.5zM778.25 321.6h3.5v3.4h-3.5zM778.25 327.2h3.5v3.4h-3.5zM783.9 316h3.5v3.4h-3.5zM783.9 321.6h3.5v3.4h-3.5zM783.9 327.2h3.5v3.4h-3.5zM806.6 214h3.5v3.4h-3.5zM806.6 219.6h3.5v3.4h-3.5zM806.6 225.2h3.5v3.4h-3.5zM812.25 214h3.5v3.4h-3.5zM812.25 219.6h3.5v3.4h-3.5zM812.25 225.2h3.5v3.4h-3.5zM817.9 214h3.5v3.4h-3.5zM817.9 219.6h3.5v3.4h-3.5zM817.9 225.2h3.5v3.4h-3.5zM806.6 248h3.5v3.4h-3.5zM806.6 253.6h3.5v3.4h-3.5zM806.6 259.2h3.5v3.4h-3.5zM812.25 248h3.5v3.4h-3.5zM812.25 253.6h3.5v3.4h-3.5zM812.25 259.2h3.5v3.4h-3.5zM817.9 248h3.5v3.4h-3.5zM817.9 253.6h3.5v3.4h-3.5zM817.9 259.2h3.5v3.4h-3.5zM806.6 282h3.5v3.4h-3.5zM806.6 287.6h3.5v3.4h-3.5zM806.6 293.2h3.5v3.4h-3.5zM812.25 282h3.5v3.4h-3.5zM812.25 287.6h3.5v3.4h-3.5zM812.25 293.2h3.5v3.4h-3.5zM817.9 282h3.5v3.4h-3.5zM817.9 287.6h3.5v3.4h-3.5zM817.9 293.2h3.5v3.4h-3.5zM806.6 316h3.5v3.4h-3.5zM806.6 321.6h3.5v3.4h-3.5zM806.6 327.2h3.5v3.4h-3.5zM812.25 316h3.5v3.4h-3.5zM812.25 321.6h3.5v3.4h-3.5zM812.25 327.2h3.5v3.4h-3.5zM817.9 316h3.5v3.4h-3.5zM817.9 321.6h3.5v3.4h-3.5zM817.9 327.2h3.5v3.4h-3.5zM806.6 350h3.5v3.4h-3.5zM806.6 355.6h3.5v3.4h-3.5zM806.6 361.2h3.5v3.4h-3.5zM812.25 350h3.5v3.4h-3.5zM812.25 355.6h3.5v3.4h-3.5zM812.25 361.2h3.5v3.4h-3.5zM817.9 350h3.5v3.4h-3.5zM817.9 355.6h3.5v3.4h-3.5zM817.9 361.2h3.5v3.4h-3.5zM840.6 180h3.5v3.4h-3.5zM840.6 185.6h3.5v3.4h-3.5zM840.6 191.2h3.5v3.4h-3.5zM846.25 180h3.5v3.4h-3.5zM846.25 185.6h3.5v3.4h-3.5zM846.25 191.2h3.5v3.4h-3.5zM851.9 180h3.5v3.4h-3.5zM851.9 185.6h3.5v3.4h-3.5zM851.9 191.2h3.5v3.4h-3.5zM840.6 214h3.5v3.4h-3.5zM840.6 219.6h3.5v3.4h-3.5zM840.6 225.2h3.5v3.4h-3.5zM846.25 214h3.5v3.4h-3.5zM846.25 219.6h3.5v3.4h-3.5zM846.25 225.2h3.5v3.4h-3.5zM851.9 214h3.5v3.4h-3.5zM851.9 219.6h3.5v3.4h-3.5zM851.9 225.2h3.5v3.4h-3.5zM840.6 248h3.5v3.4h-3.5zM840.6 253.6h3.5v3.4h-3.5zM840.6 259.2h3.5v3.4h-3.5zM846.25 248h3.5v3.4h-3.5zM846.25 253.6h3.5v3.4h-3.5zM846.25 259.2h3.5v3.4h-3.5zM851.9 248h3.5v3.4h-3.5zM851.9 253.6h3.5v3.4h-3.5zM851.9 259.2h3.5v3.4h-3.5zM840.6 282h3.5v3.4h-3.5zM840.6 287.6h3.5v3.4h-3.5zM840.6 293.2h3.5v3.4h-3.5zM846.25 282h3.5v3.4h-3.5zM846.25 287.6h3.5v3.4h-3.5zM846.25 293.2h3.5v3.4h-3.5zM851.9 282h3.5v3.4h-3.5zM851.9 287.6h3.5v3.4h-3.5zM851.9 293.2h3.5v3.4h-3.5zM840.6 316h3.5v3.4h-3.5zM840.6 321.6h3.5v3.4h-3.5zM840.6 327.2h3.5v3.4h-3.5zM846.25 316h3.5v3.4h-3.5zM846.25 321.6h3.5v3.4h-3.5zM846.25 327.2h3.5v3.4h-3.5zM851.9 316h3.5v3.4h-3.5zM851.9 321.6h3.5v3.4h-3.5zM851.9 327.2h3.5v3.4h-3.5zM840.6 350h3.5v3.4h-3.5zM840.6 355.6h3.5v3.4h-3.5zM840.6 361.2h3.5v3.4h-3.5zM846.25 350h3.5v3.4h-3.5zM846.25 355.6h3.5v3.4h-3.5zM846.25 361.2h3.5v3.4h-3.5zM851.9 350h3.5v3.4h-3.5zM851.9 355.6h3.5v3.4h-3.5zM851.9 361.2h3.5v3.4h-3.5zM840.6 384h3.5v3.4h-3.5zM840.6 389.6h3.5v3.4h-3.5zM840.6 395.2h3.5v3.4h-3.5zM846.25 384h3.5v3.4h-3.5zM846.25 389.6h3.5v3.4h-3.5zM846.25 395.2h3.5v3.4h-3.5zM851.9 384h3.5v3.4h-3.5zM851.9 389.6h3.5v3.4h-3.5zM851.9 395.2h3.5v3.4h-3.5zM875.1 180h3.5v3.4h-3.5zM875.1 185.6h3.5v3.4h-3.5zM875.1 191.2h3.5v3.4h-3.5zM880.75 180h3.5v3.4h-3.5zM880.75 185.6h3.5v3.4h-3.5zM880.75 191.2h3.5v3.4h-3.5zM886.4 180h3.5v3.4h-3.5zM886.4 185.6h3.5v3.4h-3.5zM886.4 191.2h3.5v3.4h-3.5zM875.1 214h3.5v3.4h-3.5zM875.1 219.6h3.5v3.4h-3.5zM875.1 225.2h3.5v3.4h-3.5zM880.75 214h3.5v3.4h-3.5zM880.75 219.6h3.5v3.4h-3.5zM880.75 225.2h3.5v3.4h-3.5zM886.4 214h3.5v3.4h-3.5zM886.4 219.6h3.5v3.4h-3.5zM886.4 225.2h3.5v3.4h-3.5zM875.1 248h3.5v3.4h-3.5zM875.1 253.6h3.5v3.4h-3.5zM875.1 259.2h3.5v3.4h-3.5zM880.75 248h3.5v3.4h-3.5zM880.75 253.6h3.5v3.4h-3.5zM880.75 259.2h3.5v3.4h-3.5zM886.4 248h3.5v3.4h-3.5zM886.4 253.6h3.5v3.4h-3.5zM886.4 259.2h3.5v3.4h-3.5zM875.1 282h3.5v3.4h-3.5zM875.1 287.6h3.5v3.4h-3.5zM875.1 293.2h3.5v3.4h-3.5zM880.75 282h3.5v3.4h-3.5zM880.75 287.6h3.5v3.4h-3.5zM880.75 293.2h3.5v3.4h-3.5zM886.4 282h3.5v3.4h-3.5zM886.4 287.6h3.5v3.4h-3.5zM886.4 293.2h3.5v3.4h-3.5zM875.1 316h3.5v3.4h-3.5zM875.1 321.6h3.5v3.4h-3.5zM875.1 327.2h3.5v3.4h-3.5zM880.75 316h3.5v3.4h-3.5zM880.75 321.6h3.5v3.4h-3.5zM880.75 327.2h3.5v3.4h-3.5zM886.4 316h3.5v3.4h-3.5zM886.4 321.6h3.5v3.4h-3.5zM886.4 327.2h3.5v3.4h-3.5zM875.1 350h3.5v3.4h-3.5zM875.1 355.6h3.5v3.4h-3.5zM875.1 361.2h3.5v3.4h-3.5zM880.75 350h3.5v3.4h-3.5zM880.75 355.6h3.5v3.4h-3.5zM880.75 361.2h3.5v3.4h-3.5zM886.4 350h3.5v3.4h-3.5zM886.4 355.6h3.5v3.4h-3.5zM886.4 361.2h3.5v3.4h-3.5zM875.1 384h3.5v3.4h-3.5zM875.1 389.6h3.5v3.4h-3.5zM875.1 395.2h3.5v3.4h-3.5zM880.75 384h3.5v3.4h-3.5zM880.75 389.6h3.5v3.4h-3.5zM880.75 395.2h3.5v3.4h-3.5zM886.4 384h3.5v3.4h-3.5zM886.4 389.6h3.5v3.4h-3.5zM886.4 395.2h3.5v3.4h-3.5zM909.1 180h3.5v3.4h-3.5zM909.1 185.6h3.5v3.4h-3.5zM909.1 191.2h3.5v3.4h-3.5zM914.75 180h3.5v3.4h-3.5zM914.75 185.6h3.5v3.4h-3.5zM914.75 191.2h3.5v3.4h-3.5zM920.4 180h3.5v3.4h-3.5zM920.4 185.6h3.5v3.4h-3.5zM920.4 191.2h3.5v3.4h-3.5zM909.1 214h3.5v3.4h-3.5zM909.1 219.6h3.5v3.4h-3.5zM909.1 225.2h3.5v3.4h-3.5zM914.75 214h3.5v3.4h-3.5zM914.75 219.6h3.5v3.4h-3.5zM914.75 225.2h3.5v3.4h-3.5zM920.4 214h3.5v3.4h-3.5zM920.4 219.6h3.5v3.4h-3.5zM920.4 225.2h3.5v3.4h-3.5zM909.1 248h3.5v3.4h-3.5zM909.1 253.6h3.5v3.4h-3.5zM909.1 259.2h3.5v3.4h-3.5zM914.75 248h3.5v3.4h-3.5zM914.75 253.6h3.5v3.4h-3.5zM914.75 259.2h3.5v3.4h-3.5zM920.4 248h3.5v3.4h-3.5zM920.4 253.6h3.5v3.4h-3.5zM920.4 259.2h3.5v3.4h-3.5zM909.1 282h3.5v3.4h-3.5zM909.1 287.6h3.5v3.4h-3.5zM909.1 293.2h3.5v3.4h-3.5zM914.75 282h3.5v3.4h-3.5zM914.75 287.6h3.5v3.4h-3.5zM914.75 293.2h3.5v3.4h-3.5zM920.4 282h3.5v3.4h-3.5zM920.4 287.6h3.5v3.4h-3.5zM920.4 293.2h3.5v3.4h-3.5zM909.1 316h3.5v3.4h-3.5zM909.1 321.6h3.5v3.4h-3.5zM909.1 327.2h3.5v3.4h-3.5zM914.75 316h3.5v3.4h-3.5zM914.75 321.6h3.5v3.4h-3.5zM914.75 327.2h3.5v3.4h-3.5zM920.4 316h3.5v3.4h-3.5zM920.4 321.6h3.5v3.4h-3.5zM920.4 327.2h3.5v3.4h-3.5zM909.1 350h3.5v3.4h-3.5zM909.1 355.6h3.5v3.4h-3.5zM909.1 361.2h3.5v3.4h-3.5zM914.75 350h3.5v3.4h-3.5zM914.75 355.6h3.5v3.4h-3.5zM914.75 361.2h3.5v3.4h-3.5zM920.4 350h3.5v3.4h-3.5zM920.4 355.6h3.5v3.4h-3.5zM920.4 361.2h3.5v3.4h-3.5zM909.1 384h3.5v3.4h-3.5zM909.1 389.6h3.5v3.4h-3.5zM909.1 395.2h3.5v3.4h-3.5zM914.75 384h3.5v3.4h-3.5zM914.75 389.6h3.5v3.4h-3.5zM914.75 395.2h3.5v3.4h-3.5zM920.4 384h3.5v3.4h-3.5zM920.4 389.6h3.5v3.4h-3.5zM920.4 395.2h3.5v3.4h-3.5zM943.1 214h3.5v3.4h-3.5zM943.1 219.6h3.5v3.4h-3.5zM943.1 225.2h3.5v3.4h-3.5zM948.75 214h3.5v3.4h-3.5zM948.75 219.6h3.5v3.4h-3.5zM948.75 225.2h3.5v3.4h-3.5zM954.4 214h3.5v3.4h-3.5zM954.4 219.6h3.5v3.4h-3.5zM954.4 225.2h3.5v3.4h-3.5zM943.1 248h3.5v3.4h-3.5zM943.1 253.6h3.5v3.4h-3.5zM943.1 259.2h3.5v3.4h-3.5zM948.75 248h3.5v3.4h-3.5zM948.75 253.6h3.5v3.4h-3.5zM948.75 259.2h3.5v3.4h-3.5zM954.4 248h3.5v3.4h-3.5zM954.4 253.6h3.5v3.4h-3.5zM954.4 259.2h3.5v3.4h-3.5zM943.1 282h3.5v3.4h-3.5zM943.1 287.6h3.5v3.4h-3.5zM943.1 293.2h3.5v3.4h-3.5zM948.75 282h3.5v3.4h-3.5zM948.75 287.6h3.5v3.4h-3.5zM948.75 293.2h3.5v3.4h-3.5zM954.4 282h3.5v3.4h-3.5zM954.4 287.6h3.5v3.4h-3.5zM954.4 293.2h3.5v3.4h-3.5zM943.1 316h3.5v3.4h-3.5zM943.1 321.6h3.5v3.4h-3.5zM943.1 327.2h3.5v3.4h-3.5zM948.75 316h3.5v3.4h-3.5zM948.75 321.6h3.5v3.4h-3.5zM948.75 327.2h3.5v3.4h-3.5zM954.4 316h3.5v3.4h-3.5zM954.4 321.6h3.5v3.4h-3.5zM954.4 327.2h3.5v3.4h-3.5zM943.1 350h3.5v3.4h-3.5zM943.1 355.6h3.5v3.4h-3.5zM943.1 361.2h3.5v3.4h-3.5zM948.75 350h3.5v3.4h-3.5zM948.75 355.6h3.5v3.4h-3.5zM948.75 361.2h3.5v3.4h-3.5zM954.4 350h3.5v3.4h-3.5zM954.4 355.6h3.5v3.4h-3.5zM954.4 361.2h3.5v3.4h-3.5zM977.1 248h3.5v3.4h-3.5zM977.1 253.6h3.5v3.4h-3.5zM977.1 259.2h3.5v3.4h-3.5zM982.75 248h3.5v3.4h-3.5zM982.75 253.6h3.5v3.4h-3.5zM982.75 259.2h3.5v3.4h-3.5zM988.4 248h3.5v3.4h-3.5zM988.4 253.6h3.5v3.4h-3.5zM988.4 259.2h3.5v3.4h-3.5zM977.1 282h3.5v3.4h-3.5zM977.1 287.6h3.5v3.4h-3.5zM977.1 293.2h3.5v3.4h-3.5zM982.75 282h3.5v3.4h-3.5zM982.75 287.6h3.5v3.4h-3.5zM982.75 293.2h3.5v3.4h-3.5zM988.4 282h3.5v3.4h-3.5zM988.4 287.6h3.5v3.4h-3.5zM988.4 293.2h3.5v3.4h-3.5zM977.1 316h3.5v3.4h-3.5zM977.1 321.6h3.5v3.4h-3.5zM977.1 327.2h3.5v3.4h-3.5zM982.75 316h3.5v3.4h-3.5zM982.75 321.6h3.5v3.4h-3.5zM982.75 327.2h3.5v3.4h-3.5zM988.4 316h3.5v3.4h-3.5zM988.4 321.6h3.5v3.4h-3.5zM988.4 327.2h3.5v3.4h-3.5z" fill="#fff"/>
<rect x="726.25" y="93.7" width="311.95000000000005" height="400.90000000000003" fill="none" stroke="#555" stroke-width="1.4"/>
<text x="787.25" y="513.3" text-anchor="middle">-5</text>
<text x="882.25" y="513.3" text-anchor="middle">0</text>
<text x="722.3" y="143.10" text-anchor="end">0.8</text>
<text x="722.3" y="180.85" text-anchor="end">0.6</text>
<text x="722.3" y="218.60" text-anchor="end">0.4</text>
<text x="722.3" y="256.35" text-anchor="end">0.2</text>
<text x="722.3" y="294.10" text-anchor="end">0</text>
<text x="722.3" y="331.85" text-anchor="end">-0.2</text>
<text x="722.3" y="369.60" text-anchor="end">-0.4</text>
<text x="722.3" y="407.35" text-anchor="end">-0.6</text>
<text x="722.3" y="445.10" text-anchor="end">-0.8</text>
<text x="722.3" y="482.85" text-anchor="end">-1</text>
<path d="M787.25 494.6 v-6 M787.25 93.7 v6 M882.25 494.6 v-6 M882.25 93.7 v6 M977.25 494.6 v-6 M977.25 93.7 v6 M726.25 100.25 h6 M1038.2 100.25 h-6 M726.25 138.0 h6 M1038.2 138.0 h-6 M726.25 175.75 h6 M1038.2 175.75 h-6 M726.25 213.5 h6 M1038.2 213.5 h-6 M726.25 251.25 h6 M1038.2 251.25 h-6 M726.25 289.0 h6 M1038.2 289.0 h-6 M726.25 326.75 h6 M1038.2 326.75 h-6 M726.25 364.5 h6 M1038.2 364.5 h-6 M726.25 402.25 h6 M1038.2 402.25 h-6 M726.25 440.0 h6 M1038.2 440.0 h-6 M726.25 477.75 h6 M1038.2 477.75 h-6" stroke="#555" stroke-width="1.3" fill="none"/>
<text x="680.8" y="105.5">×10<tspan dy="-5.5" font-size="10">5</tspan></text>
<text x="683.2" y="125"><tspan font-style="italic" font-size="13.5">μ</tspan><tspan dx="0.6">m</tspan></text>
<text x="972.8" y="513.3">5×10<tspan dy="-5.5" font-size="10">4</tspan><tspan dy="5.5" dx="6" font-style="italic" font-size="13.5">μ</tspan><tspan dx="0.8">m</tspan></text>
<defs><linearGradient id="cbg" x1="0" y1="1" x2="0" y2="0"><stop offset="0" stop-color="#00007f"/><stop offset="0.1" stop-color="#0000f0"/><stop offset="0.2" stop-color="#0050f8"/><stop offset="0.3" stop-color="#00a0f0"/><stop offset="0.4" stop-color="#00f0f0"/><stop offset="0.5" stop-color="#90f070"/><stop offset="0.6" stop-color="#f8f000"/><stop offset="0.7" stop-color="#ffa000"/><stop offset="0.8" stop-color="#ff4800"/><stop offset="0.9" stop-color="#e80000"/><stop offset="1" stop-color="#7f0000"/></linearGradient></defs>
<rect x="1059.5" y="126" width="15" height="364" fill="url(#cbg)" stroke="#222" stroke-opacity="0.55" stroke-width="0.8"/>
<text x="1082" y="492.9">0</text>
<text x="1082" y="457.0">0.01</text>
<text x="1082" y="420.6">0.02</text>
<text x="1082" y="384.2">0.03</text>
<text x="1082" y="347.8">0.04</text>
<text x="1082" y="311.4">0.05</text>
<text x="1082" y="275.0">0.06</text>
<text x="1082" y="238.6">0.07</text>
<text x="1082" y="202.2">0.08</text>
<text x="1082" y="165.8">0.09</text>
<text x="1082" y="130.8">0.1</text>
<path d="M1059.5 490.0 h3 M1074.5 490.0 h-3 M1059.5 453.6 h3 M1074.5 453.6 h-3 M1059.5 417.2 h3 M1074.5 417.2 h-3 M1059.5 380.8 h3 M1074.5 380.8 h-3 M1059.5 344.4 h3 M1074.5 344.4 h-3 M1059.5 308.0 h3 M1074.5 308.0 h-3 M1059.5 271.6 h3 M1074.5 271.6 h-3 M1059.5 235.20000000000002 h3 M1074.5 235.20000000000002 h-3 M1059.5 198.8 h3 M1074.5 198.8 h-3 M1059.5 162.40000000000003 h3 M1074.5 162.40000000000003 h-3 M1059.5 126.0 h3 M1074.5 126.0 h-3" stroke="#222" stroke-width="1" fill="none"/>
</svg>
<div class="pn" style="left:678.5px;top:524px;width:480px;height:60px"></div>
<div class="a" style="left:679.5px;top:553px;width:470px;height:1px;background:#d3d7e0"></div>
<div class="tab off" style="left:682.5px;top:530px;width:87.5px;height:23px"></div><span class="t" id="x62" style="left:685.8px;top:532.5px;font-size:13.5px;line-height:20px;height:20px;transform:scaleX(0.9529);transform-origin:0 50%;">Evaluation 2D</span>
<div class="tab off" style="left:777.5px;top:530px;width:61.0px;height:23px"></div><span class="t" id="x63" style="left:780.8px;top:532.5px;font-size:13.5px;line-height:20px;height:20px;transform:scaleX(0.9920);transform-origin:0 50%;">Progress</span>
<div class="tab off" style="left:845.5px;top:530px;width:30.0px;height:23px"></div><span class="t" id="x64" style="left:848.8px;top:532.5px;font-size:13.5px;line-height:20px;height:20px;transform:scaleX(1.0252);transform-origin:0 50%;">Log</span>
<div class="tab on" style="left:884.25px;top:530px;width:68.5px;height:24px"></div><span class="t" id="x65" style="left:888.55px;top:534px;font-size:13.5px;line-height:20px;height:20px;color:#3f618f;transform:scaleX(0.9686);transform-origin:0 50%;">Messages</span>
<svg class="a" style="left:684px;top:556px" width="20" height="20" viewBox="684 556 20 20"><path d="M688.2 561.4 L692.2 569.6" stroke="#4a4a4a" stroke-width="1.5"/><path d="M690.6 569.2 L693.6 567.8 L697.6 575 L691.4 575 Z" fill="#f3c791" stroke="#c89a66" stroke-width="0.5"/></svg>
<div class="pn" style="left:1135.5px;top:2px;width:20px;height:517px"></div>
<div class="a" style="left:1136.5px;top:31px;width:10px;height:1px;background:#d3d7e0"></div>
<div class="a" style="left:1139.8px;top:8.5px;width:6px;height:22.5px;background:#e9e9ea"></div>
</div></body></html>
